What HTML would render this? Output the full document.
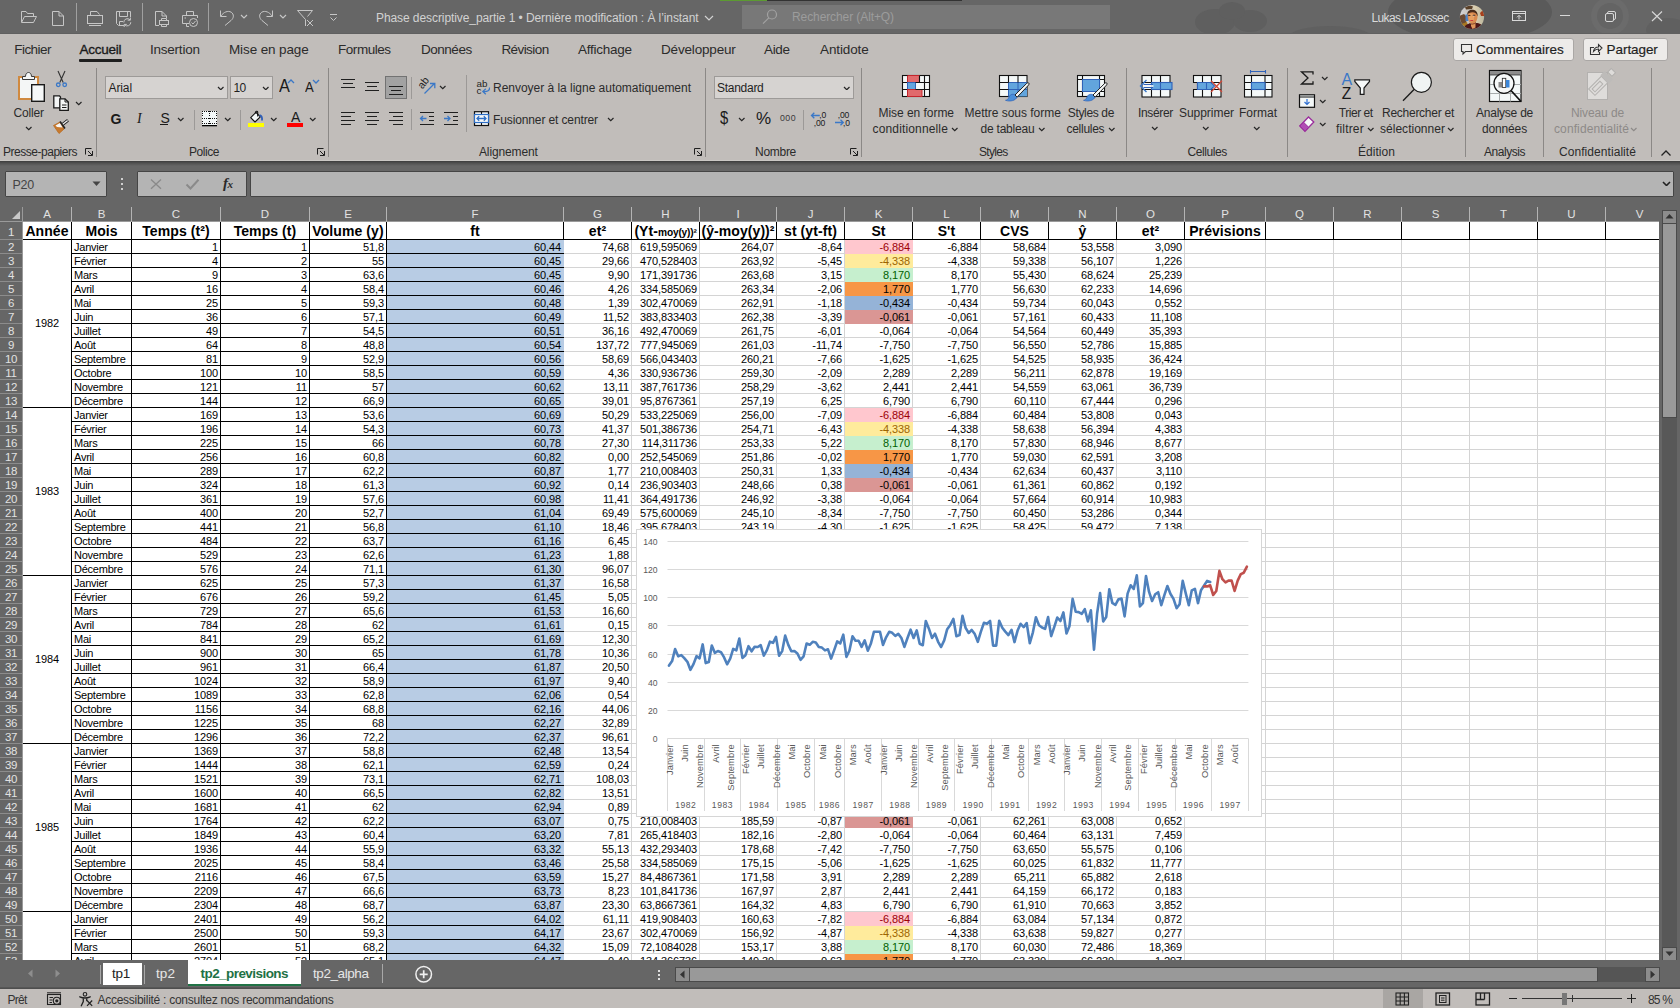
<!DOCTYPE html>
<html lang="fr"><head><meta charset="utf-8"><title>Excel</title><style>
html,body{margin:0;padding:0}
body{width:1680px;height:1008px;overflow:hidden;position:relative;background:#666;font-family:"Liberation Sans",sans-serif}
.ab{position:absolute}
.tx{position:absolute;white-space:nowrap;line-height:1}

#grid{position:absolute;overflow:hidden;background:#666}
.ab{position:absolute}
.vl{position:absolute;width:1px;background:#d4d4d4}
.hl{position:absolute;height:1px;background:#d4d4d4}
.bv{position:absolute;width:1px;background:#000}
.bh{position:absolute;height:1px;background:#000}
.cr,.cl,.cy{position:absolute;height:14px;line-height:15px;font-size:11px;letter-spacing:-0.12px;color:#000;white-space:nowrap;overflow:hidden;box-sizing:border-box}
.cr{text-align:right;padding-right:2px}
.cl{text-align:left;padding-left:2px;letter-spacing:-0.24px}
.cy{text-align:center}
.h1{position:absolute;height:17px;line-height:18px;font-size:14px;font-weight:bold;text-align:center;white-space:nowrap;overflow:hidden;color:#000;letter-spacing:0.08px}
.h1 .sm{font-size:10.2px;letter-spacing:-0.2px}
.ch{position:absolute;top:0;height:14px;line-height:15px;text-align:center;color:#e2e2e2;font-size:11.5px}
.rh{position:absolute;left:0;width:22px;text-align:center;color:#e2e2e2;font-size:11.5px;letter-spacing:-0.3px}
</style></head>
<body>
<div id="title" class="ab" style="left:0;top:0;width:1680px;height:34px;background:#666;overflow:hidden">
<svg class="ab" style="left:1080px;top:0" width="600" height="34" viewBox="1080 0 600 34"><ellipse cx="1215" cy="22" rx="20" ry="13" fill="#5f5f5f"/><ellipse cx="1250" cy="21" rx="17" ry="11" fill="#5f5f5f"/><ellipse cx="1232" cy="11" rx="13" ry="9" fill="#5f5f5f"/><ellipse cx="1330" cy="36" rx="40" ry="10" fill="#606060"/><ellipse cx="1470" cy="12" rx="82" ry="30" fill="#5a5a5a"/><circle cx="1610" cy="16" r="19" fill="#6b6b6b"/><circle cx="1610" cy="16" r="13" fill="#646464"/><ellipse cx="1668" cy="30" rx="22" ry="12" fill="#606060"/></svg>
<div class="ab" style="left:720px;top:0;width:47px;height:1px;background:#5c9a32"></div>
<div class="ab" style="left:767px;top:0;width:195px;height:1px;background:#333"></div>
<svg class="ab" style="left:20px;top:9px" width="18" height="16" viewBox="0 0 18 16"><path d="M1.5 13V2.5H6L7.5 4.5H13.5V7" fill="none" stroke="#c6c6c6" stroke-width="1"/><path d="M1.5 13.5L4.5 7.5H16.5L13.5 13.5Z" fill="none" stroke="#c6c6c6" stroke-width="1"/></svg>
<svg class="ab" style="left:51px;top:10px" width="14" height="17" viewBox="0 0 14 17"><path d="M1.5 1.5H8L12.5 6V15.5H1.5Z" fill="none" stroke="#c6c6c6" stroke-width="1"/><path d="M8 1.5V6H12.5" fill="none" stroke="#c6c6c6" stroke-width="1"/></svg>
<div class="ab" style="left:76px;top:3px;width:1px;height:28px;background:#a0a0a0"></div>
<svg class="ab" style="left:86px;top:10px" width="18" height="17" viewBox="0 0 18 17"><path d="M4.5 5V1.5H11L13.5 4.5" fill="none" stroke="#c6c6c6" stroke-width="1"/><rect x="1.5" y="5.5" width="15" height="8" fill="none" stroke="#c6c6c6" stroke-width="1"/><path d="M3 15.5H15" fill="none" stroke="#c6c6c6" stroke-width="1"/></svg>
<svg class="ab" style="left:115px;top:10px" width="18" height="17" viewBox="0 0 18 17"><path d="M9 15.5H3.5L1.5 13.5V1.5H15.5V7" fill="none" stroke="#c6c6c6" stroke-width="1"/><path d="M4.5 1.5V6.5H12.5V1.5" fill="none" stroke="#c6c6c6" stroke-width="1"/><path d="M4.500 15V11.5H8" fill="none" stroke="#c6c6c6" stroke-width="1"/><path d="M8.800 12.5A3.6 3.600 0 0 1 15 9.800M15.400 7.500V10.200H12.700" fill="none" stroke="#c6c6c6" stroke-width="1"/><path d="M15.800 12.200A3.600 3.600 0 0 1 9.600 14.800M9.200 17V14.400H11.800" fill="none" stroke="#c6c6c6" stroke-width="1"/></svg>
<div class="ab" style="left:142px;top:3px;width:1px;height:28px;background:#a0a0a0"></div>
<svg class="ab" style="left:154px;top:10px" width="16" height="17" viewBox="0 0 16 17"><path d="M5 15.500H1.500V1.500H8L12.500 6V8" fill="none" stroke="#c6c6c6" stroke-width="1"/><path d="M8 1.500V6H12.500" fill="none" stroke="#c6c6c6" stroke-width="1"/><rect x="5.500" y="10.500" width="9" height="4" fill="none" stroke="#c6c6c6" stroke-width="1"/><path d="M7.500 10.500V8.500H12.500V10.500M7.500 14.500V16.500H12.500V14.500" fill="none" stroke="#c6c6c6" stroke-width="1"/></svg>
<svg class="ab" style="left:181px;top:10px" width="18" height="17" viewBox="0 0 18 17"><path d="M5.500 5.500V1.500H12.500V5.500" fill="none" stroke="#c6c6c6" stroke-width="1"/><path d="M8 13.500H5.500V16.500H8M5.500 13.500H1.500V5.500H16.500V8" fill="none" stroke="#c6c6c6" stroke-width="1"/><circle cx="12.500" cy="12.500" r="4" fill="none" stroke="#c6c6c6" stroke-width="1"/><path d="M10.500 12.500L12 14L14.500 11" fill="none" stroke="#c6c6c6" stroke-width="1"/><path d="M3.500 8H5" fill="none" stroke="#c6c6c6" stroke-width="1"/></svg>
<div class="ab" style="left:208px;top:3px;width:1px;height:28px;background:#a0a0a0"></div>
<svg class="ab" style="left:219px;top:9px" width="16" height="18" viewBox="0 0 16 18"><path d="M1.500 1.500V7.500H7.500" fill="none" stroke="#c6c6c6" stroke-width="1" stroke-width="1.200"/><path d="M1.800 7.200C4.500 3 9 1.300 12.200 3.200C15.200 5.200 15 9 12 11.500L6 16.500" fill="none" stroke="#c6c6c6" stroke-width="1" stroke-width="1.200"/></svg>
<svg class="ab" style="left:239.5px;top:14.0px" width="8" height="5.0"><path d="M1 1L4.0 4.0L7 1" fill="none" stroke="#c6c6c6" stroke-width="1.2"/></svg>
<svg class="ab" style="left:258px;top:9px" width="16" height="18" viewBox="0 0 16 18"><path d="M14.500 1.500V7.500H8.500" fill="none" stroke="#c6c6c6" stroke-width="1" stroke-width="1.200"/><path d="M14.200 7.200C11.500 3 7 1.300 3.800 3.200C0.800 5.200 1 9 4 11.500L10 16.500" fill="none" stroke="#c6c6c6" stroke-width="1" stroke-width="1.200"/></svg>
<svg class="ab" style="left:278.5px;top:14.0px" width="8" height="5.0"><path d="M1 1L4.0 4.0L7 1" fill="none" stroke="#c6c6c6" stroke-width="1.2"/></svg>
<svg class="ab" style="left:296px;top:9px" width="18" height="18" viewBox="0 0 18 18"><path d="M9.500 17V10.500L1.500 1.500H16.500L11.500 7.500" fill="none" stroke="#c6c6c6" stroke-width="1" stroke-width="1.200"/><path d="M11 11L17 17M17 11L11 17" fill="none" stroke="#c6c6c6" stroke-width="1" stroke-width="1.200"/></svg>
<svg class="ab" style="left:329px;top:12px" width="9" height="10" viewBox="0 0 9 10"><path d="M1 2.500H8" fill="none" stroke="#c6c6c6" stroke-width="1" stroke-width="1.200"/><path d="M1.500 5.500L4.500 8.500L7.500 5.500" fill="none" stroke="#c6c6c6" stroke-width="1" stroke-width="1.200"/></svg>
<span class="tx" style="left:376.0px;top:9.5px;height:16px;line-height:16px;font-size:12px;color:#d2d2d2;letter-spacing:-0.081px;">Phase descriptive_partie 1 • Dernière modification : À l’instant</span>
<svg class="ab" style="left:703.5px;top:14.5px" width="10" height="6.0"><path d="M1 1L5.0 5.0L9 1" fill="none" stroke="#d2d2d2" stroke-width="1.2"/></svg>
<div class="ab" style="left:742px;top:5px;width:368px;height:24px;background:#787878"></div>
<svg class="ab" style="left:761px;top:8px" width="18" height="18" viewBox="0 0 18 18"><circle cx="11" cy="6.500" r="4.500" fill="none" stroke="#a2a2a2" stroke-width="1.200"/><path d="M7.800 9.800L2 15.600" stroke="#a2a2a2" stroke-width="1.200"/></svg>
<span class="tx" style="left:792.0px;top:8.5px;height:16px;line-height:16px;font-size:12px;color:#9c9c9c;letter-spacing:-0.095px;">Rechercher (Alt+Q)</span>
<span class="tx" style="left:1371.5px;top:9.5px;height:16px;line-height:16px;font-size:12px;color:#dadada;letter-spacing:-0.647px;">Lukas LeJossec</span>
<svg class="ab" style="left:1459px;top:4px" width="26" height="26" viewBox="1459 4 26 26"><defs><clipPath id="av"><circle cx="1472" cy="17" r="12.100"/></clipPath><linearGradient id="avg" x1="0" x2="1" y1="0" y2="0"><stop offset="0" stop-color="#d4d4d8"/><stop offset="0.450" stop-color="#c4c0b8"/><stop offset="0.600" stop-color="#dccfb0"/><stop offset="1" stop-color="#b8b49c"/></linearGradient></defs><g clip-path="url(#av)"><rect x="1459" y="4" width="26" height="26" fill="url(#avg)"/><path d="M1459 16L1464 14L1467 17L1466 24L1459 27Z" fill="#6b4a32"/><path d="M1461 24L1467 22L1469 30L1460 30Z" fill="#a87820"/><rect x="1465.500" y="14.500" width="3" height="6.500" fill="#4a80c4"/><path d="M1480 13L1484 9L1485 16L1481 16Z" fill="#a8401c"/><path d="M1465 7L1470 5.500L1473 6.500L1472 9L1466 9.500Z" fill="#5a4028"/><path d="M1464 30C1464 25 1468 23 1472 24C1476 22 1483 23 1484 30Z" fill="#4c1719"/><path d="M1471 22H1475.500V27.500L1472.500 29L1471 26Z" fill="#e0965c"/><ellipse cx="1472.600" cy="17" rx="4.900" ry="6.400" fill="#d98a4e"/><ellipse cx="1471.500" cy="17.500" rx="2.600" ry="4" fill="#e6a060"/><path d="M1467.300 15C1467 11 1470 9.300 1473 9.800C1476.500 10.300 1478 13 1477.600 16.500C1476.800 13.500 1475 12.300 1472.500 12.300C1470 12.300 1468.300 13.200 1467.300 15Z" fill="#4a2c1a"/><rect x="1468.200" y="15" width="2.200" height="1" fill="#4a2c1a"/><rect x="1472.800" y="14.800" width="2.400" height="1.100" fill="#3a2418"/><rect x="1473.400" y="15.600" width="1" height="0.800" fill="#eee"/><rect x="1470.300" y="20" width="2.800" height="0.900" fill="#c8343c"/><path d="M1469 23.200C1471 24.500 1474 24.500 1476 22.500" stroke="#6a3018" stroke-width="0.800" fill="none"/></g></svg>
<svg class="ab" style="left:1511px;top:10px" width="16" height="12" viewBox="0 0 16 12"><rect x="1.500" y="1.500" width="13" height="9" fill="none" stroke="#d8d8d8"/><path d="M1.500 3.500H14.500" stroke="#d8d8d8"/><path d="M8 9.500V5.500M6 7.300L8 5.300L10 7.300" fill="none" stroke="#d8d8d8"/></svg>
<div class="ab" style="left:1560px;top:15px;width:10px;height:1px;background:#d8d8d8"></div>
<svg class="ab" style="left:1605px;top:11px" width="12" height="11" viewBox="0 0 12 11"><rect x="0.500" y="2.500" width="8" height="8" rx="1.500" fill="none" stroke="#d8d8d8"/><path d="M2.500 2.500V2A1.500 1.500 0 0 1 4 0.500H9A1.500 1.500 0 0 1 10.500 2V7A1.500 1.500 0 0 1 9 8.500H8.500" fill="none" stroke="#d8d8d8"/></svg>
<svg class="ab" style="left:1651px;top:11px" width="12" height="11" viewBox="0 0 12 11"><path d="M1 0.500L11 10M11 0.500L1 10" stroke="#d8d8d8" stroke-width="1.100"/></svg>
</div>
<div class="ab" style="left:0;top:34px;width:1680px;height:127px;background:#c1bdba"></div>
<div class="ab" style="left:0;top:160px;width:1680px;height:1px;background:#cbc8c5"></div>
<div class="ab" style="left:0;top:33px;width:1680px;height:1px;background:#606060"></div>
<span class="tx" style="left:14.3px;top:40.5px;height:18px;line-height:18px;font-size:13.5px;color:#2b2b2b;letter-spacing:-0.559px;">Fichier</span>
<span class="tx" style="left:150.0px;top:40.5px;height:18px;line-height:18px;font-size:13.5px;color:#2b2b2b;letter-spacing:-0.231px;">Insertion</span>
<span class="tx" style="left:229.0px;top:40.5px;height:18px;line-height:18px;font-size:13.5px;color:#2b2b2b;letter-spacing:-0.122px;">Mise en page</span>
<span class="tx" style="left:338.0px;top:40.5px;height:18px;line-height:18px;font-size:13.5px;color:#2b2b2b;letter-spacing:-0.458px;">Formules</span>
<span class="tx" style="left:421.0px;top:40.5px;height:18px;line-height:18px;font-size:13.5px;color:#2b2b2b;letter-spacing:-0.478px;">Données</span>
<span class="tx" style="left:501.4px;top:40.5px;height:18px;line-height:18px;font-size:13.5px;color:#2b2b2b;letter-spacing:-0.573px;">Révision</span>
<span class="tx" style="left:578.0px;top:40.5px;height:18px;line-height:18px;font-size:13.5px;color:#2b2b2b;letter-spacing:-0.261px;">Affichage</span>
<span class="tx" style="left:661.0px;top:40.5px;height:18px;line-height:18px;font-size:13.5px;color:#2b2b2b;letter-spacing:-0.169px;">Développeur</span>
<span class="tx" style="left:764.0px;top:40.5px;height:18px;line-height:18px;font-size:13.5px;color:#2b2b2b;letter-spacing:-0.333px;">Aide</span>
<span class="tx" style="left:820.0px;top:40.5px;height:18px;line-height:18px;font-size:13.5px;color:#2b2b2b;letter-spacing:-0.118px;">Antidote</span>
<span class="tx" style="left:79.4px;top:40.5px;height:18px;line-height:18px;font-size:13.5px;color:#1a1a1a;letter-spacing:-0.219px;-webkit-text-stroke:0.35px #1a1a1a;">Accueil</span>
<div class="ab" style="left:79px;top:59px;width:43px;height:3px;background:#1f1f1f;border-radius:1px"></div>
<div class="ab" style="left:1453px;top:38px;width:119px;height:21px;background:#edebe9;border:1px solid #aaa7a5;border-radius:3px"></div>
<svg class="ab" style="left:1460px;top:43px" width="13" height="13" viewBox="0 0 13 13"><path d="M1.500 1.500H11.500V8.500H5.500L3 11V8.500H1.500Z" fill="none" stroke="#333" stroke-width="1.100"/></svg>
<span class="tx" style="left:1476.0px;top:40.5px;height:18px;line-height:18px;font-size:13.5px;color:#1f1f1f;letter-spacing:-0.007px;-webkit-text-stroke:0.18px #1f1f1f;">Commentaires</span>
<div class="ab" style="left:1583px;top:38px;width:83px;height:21px;background:#edebe9;border:1px solid #aaa7a5;border-radius:3px"></div>
<svg class="ab" style="left:1589px;top:42px" width="14" height="14" viewBox="0 0 14 14"><path d="M5 5.500H1.500V12.500H10.500V10" fill="none" stroke="#333" stroke-width="1.100"/><path d="M4.500 9.500C5 6.500 7 5 9.500 5V2.500L13 6L9.500 9.500V7C7.500 7 6 7.800 4.500 9.500Z" fill="none" stroke="#333" stroke-width="1.100"/></svg>
<span class="tx" style="left:1606.6px;top:40.5px;height:18px;line-height:18px;font-size:13.5px;color:#1f1f1f;letter-spacing:-0.073px;-webkit-text-stroke:0.18px #1f1f1f;">Partager</span>
<svg class="ab" style="left:17px;top:71px" width="30" height="32" viewBox="0 0 30 32"><rect x="2" y="6" width="19" height="22" fill="#f4f6f6" stroke="#d0893f" stroke-width="2"/><path d="M5.500 8.500V5.500H8.500C8.500 3 9.800 1.500 11.500 1.500C13.200 1.500 14.500 3 14.500 5.500H17.500V8.500Z" fill="#f4f6f6" stroke="#3a3a3a" stroke-width="1"/><rect x="14.700" y="13.700" width="12.600" height="16.600" fill="#f6f8f8" stroke="#1a1a1a" stroke-width="1.400"/></svg>
<span class="tx" style="left:13.6px;top:105.0px;height:16px;line-height:16px;font-size:12px;color:#2b2b2b;letter-spacing:-0.207px;">Coller</span>
<svg class="ab" style="left:24.55px;top:126.125px" width="7.5" height="4.75"><path d="M1 1L3.75 3.75L6.5 1" fill="none" stroke="#262626" stroke-width="1.2"/></svg>
<svg class="ab" style="left:55px;top:70px" width="13" height="18" viewBox="0 0 13 18"><path d="M3 1L8.200 12.500M10 1L4.800 12.500" fill="none" stroke="#333" stroke-width="1.100"/><circle cx="3.300" cy="14.800" r="1.800" fill="none" stroke="#3b78c7" stroke-width="1.300"/><circle cx="9.700" cy="14.800" r="1.800" fill="none" stroke="#3b78c7" stroke-width="1.300"/></svg>
<svg class="ab" style="left:52px;top:94px" width="19" height="19" viewBox="0 0 19 19"><path d="M1.800 1.800H7.500L8.500 3V13.800H1.800Z" fill="#f4f6f6" stroke="#1a1a1a" stroke-width="1.300"/><path d="M7.800 4.800H13L16.300 8V16.300H7.800Z" fill="#f4f6f6" stroke="#1a1a1a" stroke-width="1.300"/><path d="M13 4.800V8H16.300" fill="none" stroke="#1a1a1a" stroke-width="1"/><path d="M10 11H14.500M10 13.500H14.500" stroke="#1a1a1a" stroke-width="1"/></svg>
<svg class="ab" style="left:74.65px;top:101.225px" width="7.5" height="4.75"><path d="M1 1L3.75 3.75L6.5 1" fill="none" stroke="#262626" stroke-width="1.2"/></svg>
<svg class="ab" style="left:52px;top:118px" width="19" height="17" viewBox="0 0 19 17"><path d="M1.500 7.500L8 4L12 11L7 15.500Z" fill="#c87a2e" stroke="#b86a20" stroke-width="0.800"/><path d="M3.500 7.500L8 5L10.500 9.500L5 9Z" fill="#f6f6f6"/><path d="M8 3.500L13 10.500" stroke="#222" stroke-width="1.600"/><path d="M10.500 6.500L16 2.200" stroke="#222" stroke-width="3"/><path d="M10.800 6.300L15.600 2.500" stroke="#f4f4f4" stroke-width="1.200"/></svg>
<span class="tx" style="left:3.0px;top:144.3px;height:16px;line-height:16px;font-size:12px;color:#2b2b2b;letter-spacing:-0.479px;">Presse-papiers</span>
<svg class="ab" style="left:85px;top:148px" width="9" height="9"><path d="M6.500 0.500H0.500V6.500" fill="none" stroke="#1f1f1f" stroke-width="1"/><path d="M3 3L7.200 7.200M7.500 3V7.500H3" fill="none" stroke="#1f1f1f" stroke-width="1"/></svg>
<div class="ab" style="left:96px;top:68px;width:1px;height:89px;background:#8b8886"></div>
<div class="ab" style="left:105px;top:76px;width:121px;height:21px;background:#d6d3d1;border:1px solid #9d9a98"></div>
<span class="tx" style="left:108.5px;top:79.5px;height:16px;line-height:16px;font-size:12px;color:#1f1f1f;letter-spacing:-0.103px;">Arial</span>
<svg class="ab" style="left:217.25px;top:85.625px" width="7.5" height="4.75"><path d="M1 1L3.75 3.75L6.5 1" fill="none" stroke="#262626" stroke-width="1.2"/></svg>
<div class="ab" style="left:230px;top:76px;width:41px;height:21px;background:#d6d3d1;border:1px solid #9d9a98"></div>
<span class="tx" style="left:233.5px;top:79.5px;height:16px;line-height:16px;font-size:12px;color:#1f1f1f;letter-spacing:-0.680px;">10</span>
<svg class="ab" style="left:262.25px;top:85.625px" width="7.5" height="4.75"><path d="M1 1L3.75 3.75L6.5 1" fill="none" stroke="#262626" stroke-width="1.2"/></svg>
<span class="tx" style="left:279.0px;top:73.5px;height:24px;line-height:24px;font-size:18.5px;color:#1a1a1a;letter-spacing:1.438px;transform:scaleX(0.88);transform-origin:left center;">A</span>
<svg class="ab" style="left:287px;top:79px" width="8" height="5" viewBox="0 0 8 5"><path d="M1 4L4 1L7 4" fill="none" stroke="#3b78c7" stroke-width="1.300"/></svg>
<span class="tx" style="left:304.5px;top:77.5px;height:19px;line-height:19px;font-size:14.5px;color:#1a1a1a;letter-spacing:0.995px;transform:scaleX(0.9);transform-origin:left center;">A</span>
<svg class="ab" style="left:312px;top:79px" width="8" height="5" viewBox="0 0 8 5"><path d="M1 1L4 4L7 1" fill="none" stroke="#3b78c7" stroke-width="1.300"/></svg>
<span class="tx" style="left:110.5px;top:109.5px;height:18px;line-height:18px;font-size:14px;color:#1a1a1a;letter-spacing:-0.391px;font-weight:bold;">G</span>
<span class="tx" style="left:137.0px;top:109.5px;height:18px;line-height:18px;font-size:14px;color:#1a1a1a;letter-spacing:1.828px;font-style:italic;font-family:'Liberation Serif',serif;">I</span>
<span class="tx" style="left:160.5px;top:109.0px;height:18px;line-height:18px;font-size:14px;color:#1a1a1a;letter-spacing:-2.344px;">S</span>
<div class="ab" style="left:160px;top:124px;width:8px;height:1px;background:#1a1a1a"></div>
<svg class="ab" style="left:177.25px;top:117.125px" width="7.5" height="4.75"><path d="M1 1L3.75 3.75L6.5 1" fill="none" stroke="#262626" stroke-width="1.2"/></svg>
<div class="ab" style="left:194px;top:110px;width:1px;height:20px;background:#9c9997"></div>
<svg class="ab" style="left:200px;top:109px" width="20" height="20" viewBox="200 109 20 20"><rect x="202" y="111" width="15" height="14" fill="#f4f8f8"/><rect x="202" y="111" width="1" height="1" fill="#111"/><rect x="204" y="111" width="1" height="1" fill="#111"/><rect x="206" y="111" width="1" height="1" fill="#111"/><rect x="208" y="111" width="1" height="1" fill="#111"/><rect x="210" y="111" width="1" height="1" fill="#111"/><rect x="212" y="111" width="1" height="1" fill="#111"/><rect x="214" y="111" width="1" height="1" fill="#111"/><rect x="216" y="111" width="1" height="1" fill="#111"/><rect x="202" y="118" width="1" height="1" fill="#111"/><rect x="204" y="118" width="1" height="1" fill="#111"/><rect x="206" y="118" width="1" height="1" fill="#111"/><rect x="208" y="118" width="1" height="1" fill="#111"/><rect x="210" y="118" width="1" height="1" fill="#111"/><rect x="212" y="118" width="1" height="1" fill="#111"/><rect x="214" y="118" width="1" height="1" fill="#111"/><rect x="216" y="118" width="1" height="1" fill="#111"/><rect x="202" y="123" width="1" height="1" fill="#111"/><rect x="204" y="123" width="1" height="1" fill="#111"/><rect x="206" y="123" width="1" height="1" fill="#111"/><rect x="208" y="123" width="1" height="1" fill="#111"/><rect x="210" y="123" width="1" height="1" fill="#111"/><rect x="212" y="123" width="1" height="1" fill="#111"/><rect x="214" y="123" width="1" height="1" fill="#111"/><rect x="216" y="123" width="1" height="1" fill="#111"/><rect x="202" y="111" width="1" height="1" fill="#111"/><rect x="202" y="113" width="1" height="1" fill="#111"/><rect x="202" y="115" width="1" height="1" fill="#111"/><rect x="202" y="118" width="1" height="1" fill="#111"/><rect x="202" y="121" width="1" height="1" fill="#111"/><rect x="202" y="123" width="1" height="1" fill="#111"/><rect x="209" y="111" width="1" height="1" fill="#111"/><rect x="209" y="113" width="1" height="1" fill="#111"/><rect x="209" y="115" width="1" height="1" fill="#111"/><rect x="209" y="118" width="1" height="1" fill="#111"/><rect x="209" y="121" width="1" height="1" fill="#111"/><rect x="209" y="123" width="1" height="1" fill="#111"/><rect x="216" y="111" width="1" height="1" fill="#111"/><rect x="216" y="113" width="1" height="1" fill="#111"/><rect x="216" y="115" width="1" height="1" fill="#111"/><rect x="216" y="118" width="1" height="1" fill="#111"/><rect x="216" y="121" width="1" height="1" fill="#111"/><rect x="216" y="123" width="1" height="1" fill="#111"/><rect x="202" y="125" width="15" height="1.300" fill="#000"/></svg>
<svg class="ab" style="left:223.75px;top:117.125px" width="7.5" height="4.75"><path d="M1 1L3.75 3.75L6.5 1" fill="none" stroke="#262626" stroke-width="1.2"/></svg>
<div class="ab" style="left:240px;top:110px;width:1px;height:20px;background:#9c9997"></div>
<svg class="ab" style="left:246px;top:108px" width="22" height="21" viewBox="246 108 22 21"><path d="M250.700 117.600L256 112.300L260.300 116.800L255 122Z" fill="#f4f8f8" stroke="#111" stroke-width="1.100" stroke-linejoin="round"/><path d="M255.300 113.200C255.300 110.800 257.700 110.600 257.700 112.500V116.600" fill="none" stroke="#111" stroke-width="1.100"/><path d="M259.600 115.200C261.800 115.800 262.300 118 262 120.500" fill="none" stroke="#2f5fb8" stroke-width="1.800"/><rect x="248" y="123" width="16" height="4" fill="#ffff00"/></svg>
<svg class="ab" style="left:269.75px;top:117.125px" width="7.5" height="4.75"><path d="M1 1L3.75 3.75L6.5 1" fill="none" stroke="#262626" stroke-width="1.2"/></svg>
<span class="tx" style="left:290.6px;top:106.8px;height:20px;line-height:20px;font-size:15.5px;color:#1a1a1a;letter-spacing:1.091px;transform:scaleX(0.9);transform-origin:left center;">A</span>
<div class="ab" style="left:287px;top:123px;width:16px;height:4px;background:#ff0000"></div>
<svg class="ab" style="left:308.85px;top:117.125px" width="7.5" height="4.75"><path d="M1 1L3.75 3.75L6.5 1" fill="none" stroke="#262626" stroke-width="1.2"/></svg>
<span class="tx" style="left:189.0px;top:144.3px;height:16px;line-height:16px;font-size:12px;color:#2b2b2b;letter-spacing:-0.448px;">Police</span>
<svg class="ab" style="left:317px;top:148px" width="9" height="9"><path d="M6.500 0.500H0.500V6.500" fill="none" stroke="#1f1f1f" stroke-width="1"/><path d="M3 3L7.200 7.200M7.500 3V7.500H3" fill="none" stroke="#1f1f1f" stroke-width="1"/></svg>
<div class="ab" style="left:328px;top:68px;width:1px;height:89px;background:#8b8886"></div>
<div class="ab" style="left:385px;top:76px;width:20px;height:21px;background:#a2a2a2;border:1px solid #727272"></div>
<svg class="ab" style="left:340px;top:76px" width="120" height="54" viewBox="340 76 120 54"><rect x="341" y="79" width="14" height="1" fill="#1f1f1f"/><rect x="343" y="83" width="10" height="1" fill="#1f1f1f"/><rect x="341" y="87" width="14" height="1" fill="#1f1f1f"/><rect x="365" y="82" width="14" height="1" fill="#1f1f1f"/><rect x="367" y="86" width="10" height="1" fill="#1f1f1f"/><rect x="365" y="90" width="14" height="1" fill="#1f1f1f"/><rect x="389" y="86" width="14" height="1" fill="#1f1f1f"/><rect x="391" y="90" width="10" height="1" fill="#1f1f1f"/><rect x="389" y="94" width="14" height="1" fill="#1f1f1f"/><rect x="341" y="112" width="14" height="1" fill="#1f1f1f"/><rect x="341" y="116" width="10" height="1" fill="#1f1f1f"/><rect x="341" y="120" width="14" height="1" fill="#1f1f1f"/><rect x="341" y="124" width="10" height="1" fill="#1f1f1f"/><rect x="365" y="112" width="14" height="1" fill="#1f1f1f"/><rect x="367" y="116" width="10" height="1" fill="#1f1f1f"/><rect x="365" y="120" width="14" height="1" fill="#1f1f1f"/><rect x="367" y="124" width="10" height="1" fill="#1f1f1f"/><rect x="389" y="112" width="14" height="1" fill="#1f1f1f"/><rect x="393" y="116" width="10" height="1" fill="#1f1f1f"/><rect x="389" y="120" width="14" height="1" fill="#1f1f1f"/><rect x="393" y="124" width="10" height="1" fill="#1f1f1f"/><rect x="420" y="112" width="14" height="1" fill="#1f1f1f"/><rect x="429" y="116" width="5" height="1" fill="#1f1f1f"/><rect x="429" y="120" width="5" height="1" fill="#1f1f1f"/><rect x="420" y="124" width="14" height="1" fill="#1f1f1f"/><rect x="444" y="112" width="14" height="1" fill="#1f1f1f"/><rect x="453" y="116" width="5" height="1" fill="#1f1f1f"/><rect x="453" y="120" width="5" height="1" fill="#1f1f1f"/><rect x="444" y="124" width="14" height="1" fill="#1f1f1f"/><path d="M426.500 118.500H420.500M423 116L420.500 118.500L423 121" fill="none" stroke="#3b78c7" stroke-width="1.300"/><path d="M444 118.500H450M447.500 116L450 118.500L447.500 121" fill="none" stroke="#3b78c7" stroke-width="1.300"/></svg>
<div class="ab" style="left:411px;top:77px;width:1px;height:22px;background:#9c9997"></div>
<svg class="ab" style="left:416px;top:74px" width="24" height="24" viewBox="416 74 24 24"><text x="0" y="0" font-size="10.500" fill="#1f1f1f" transform="translate(422.500 89.500) rotate(-52)" font-family="Liberation Sans,sans-serif">ab</text><path d="M424.500 93.500L434.500 83.500M430 83.500H434.800V88.300" fill="none" stroke="#3b78c7" stroke-width="1.300"/></svg>
<svg class="ab" style="left:438.75px;top:85.125px" width="7.5" height="4.75"><path d="M1 1L3.75 3.75L6.5 1" fill="none" stroke="#262626" stroke-width="1.2"/></svg>
<div class="ab" style="left:466px;top:75px;width:1px;height:57px;background:#9c9997"></div>
<svg class="ab" style="left:475px;top:76px" width="18" height="22" viewBox="475 76 18 22"><text x="476.500" y="86.800" font-size="9.800" fill="#1f1f1f" font-family="Liberation Sans,sans-serif">ab</text><text x="476.500" y="93.800" font-size="9.800" fill="#1f1f1f" font-family="Liberation Sans,sans-serif">c</text><path d="M489.500 87.500C490 90.500 487.500 91.800 483.300 91.500M485.800 88.800L482.800 91.500L485.800 94.300" fill="none" stroke="#3b78c7" stroke-width="1.200"/></svg>
<span class="tx" style="left:493.0px;top:79.5px;height:16px;line-height:16px;font-size:12px;color:#2b2b2b;letter-spacing:-0.023px;">Renvoyer à la ligne automatiquement</span>
<div class="ab" style="left:411px;top:109px;width:1px;height:21px;background:#9c9997"></div>
<svg class="ab" style="left:472px;top:109px" width="20" height="19" viewBox="472 109 20 19"><rect x="474.500" y="111.700" width="14" height="13.800" fill="#f6f8f8" stroke="#111" stroke-width="1.200"/><path d="M481.500 111.700V114.500M481.500 122.500V125.500" stroke="#111" stroke-width="1.100"/><rect x="474.500" y="114.500" width="14" height="8" fill="#f6f8f8" stroke="#2f6fc6" stroke-width="1.200"/><path d="M477 118.500H486M479.200 116.300L477 118.500L479.200 120.700M483.800 116.300L486 118.500L483.800 120.700" fill="none" stroke="#2f6fc6" stroke-width="1.300"/></svg>
<span class="tx" style="left:493.0px;top:111.5px;height:16px;line-height:16px;font-size:12px;color:#2b2b2b;letter-spacing:-0.120px;">Fusionner et centrer</span>
<svg class="ab" style="left:607.25px;top:117.125px" width="7.5" height="4.75"><path d="M1 1L3.75 3.75L6.5 1" fill="none" stroke="#262626" stroke-width="1.2"/></svg>
<span class="tx" style="left:479.0px;top:144.3px;height:16px;line-height:16px;font-size:12px;color:#2b2b2b;letter-spacing:-0.135px;">Alignement</span>
<svg class="ab" style="left:694px;top:148px" width="9" height="9"><path d="M6.500 0.500H0.500V6.500" fill="none" stroke="#1f1f1f" stroke-width="1"/><path d="M3 3L7.200 7.200M7.500 3V7.500H3" fill="none" stroke="#1f1f1f" stroke-width="1"/></svg>
<div class="ab" style="left:705px;top:68px;width:1px;height:89px;background:#8b8886"></div>
<div class="ab" style="left:714px;top:76px;width:138px;height:21px;background:#d6d3d1;border:1px solid #9d9a98"></div>
<span class="tx" style="left:717.0px;top:79.5px;height:16px;line-height:16px;font-size:12px;color:#1f1f1f;letter-spacing:-0.275px;">Standard</span>
<svg class="ab" style="left:843.25px;top:85.625px" width="7.5" height="4.75"><path d="M1 1L3.75 3.75L6.5 1" fill="none" stroke="#262626" stroke-width="1.2"/></svg>
<span class="tx" style="left:719.5px;top:107.3px;height:23px;line-height:23px;font-size:18px;color:#1a1a1a;letter-spacing:1.787px;transform:scaleX(0.82);transform-origin:left center;">$</span>
<svg class="ab" style="left:738.25px;top:117.125px" width="7.5" height="4.75"><path d="M1 1L3.75 3.75L6.5 1" fill="none" stroke="#262626" stroke-width="1.2"/></svg>
<span class="tx" style="left:756.0px;top:107.5px;height:22px;line-height:22px;font-size:17px;color:#1a1a1a;letter-spacing:0.375px;">%</span>
<span class="tx" style="left:780.0px;top:112.8px;height:11px;line-height:11px;font-size:8.8px;color:#3a3a3a;letter-spacing:0.438px;">000</span>
<div class="ab" style="left:803px;top:110px;width:1px;height:20px;background:#9c9997"></div>
<svg class="ab" style="left:809px;top:109px" width="20" height="20" viewBox="809 109 20 20"><path d="M819.800 115.500H811.500M814.300 112.700L811.500 115.500L814.300 118.300" fill="none" stroke="#3b78c7" stroke-width="1.300"/><text x="819.300" y="117.600" font-size="8.600" fill="#1a1a1a" font-family="Liberation Sans,sans-serif" letter-spacing="-0.200">,0</text><text x="813.800" y="126" font-size="8.600" fill="#1a1a1a" font-family="Liberation Sans,sans-serif" letter-spacing="-0.200">,00</text></svg>
<svg class="ab" style="left:833px;top:109px" width="20" height="20" viewBox="833 109 20 20"><text x="837.800" y="117.600" font-size="8.600" fill="#1a1a1a" font-family="Liberation Sans,sans-serif" letter-spacing="-0.200">,00</text><path d="M835 122.500H843.300M840.500 119.700L843.300 122.500L840.500 125.300" fill="none" stroke="#3b78c7" stroke-width="1.300"/><text x="843" y="126" font-size="8.600" fill="#1a1a1a" font-family="Liberation Sans,sans-serif" letter-spacing="-0.200">,0</text></svg>
<span class="tx" style="left:755.0px;top:144.3px;height:16px;line-height:16px;font-size:12px;color:#2b2b2b;letter-spacing:-0.281px;">Nombre</span>
<svg class="ab" style="left:850px;top:148px" width="9" height="9"><path d="M6.500 0.500H0.500V6.500" fill="none" stroke="#1f1f1f" stroke-width="1"/><path d="M3 3L7.200 7.200M7.500 3V7.500H3" fill="none" stroke="#1f1f1f" stroke-width="1"/></svg>
<div class="ab" style="left:861px;top:68px;width:1px;height:89px;background:#8b8886"></div>
<svg class="ab" style="left:900px;top:73px" width="33" height="27" viewBox="900 73 33 27"><rect x="902.500" y="75.500" width="27" height="21" fill="#f4f8f8" stroke="#111" stroke-width="1.100"/><rect x="907.500" y="75.500" width="12" height="7" fill="#e16a6c" stroke="#c3262d" stroke-width="1"/><rect x="907.500" y="82.500" width="8" height="7" fill="#62a5dd" stroke="#2f62b8" stroke-width="1"/><rect x="907.500" y="89.500" width="14.500" height="7" fill="#e16a6c" stroke="#c3262d" stroke-width="1"/><path d="M902.500 82.500H907M915.500 82.500H929.500M902.500 89.500H907M915.500 89.500H929.500M924.500 75.500V96.500M907.500 75.500V76M919.500 82.500V75.500" fill="none" stroke="#111" stroke-width="1.100"/></svg>
<span class="tx" style="left:878.5px;top:105.0px;height:16px;line-height:16px;font-size:12px;color:#2b2b2b;letter-spacing:-0.041px;">Mise en forme</span>
<span class="tx" style="left:872.5px;top:121.2px;height:16px;line-height:16px;font-size:12px;color:#2b2b2b;letter-spacing:0.151px;">conditionnelle</span>
<svg class="ab" style="left:951.05px;top:127.125px" width="7.5" height="4.75"><path d="M1 1L3.75 3.75L6.5 1" fill="none" stroke="#262626" stroke-width="1.2"/></svg>
<svg class="ab" style="left:997px;top:73px" width="36" height="31" viewBox="997 73 36 31"><rect x="999.500" y="75.500" width="27.500" height="21" fill="#f4f8f8" stroke="#111" stroke-width="1.100"/><rect x="1008.500" y="82.500" width="18.500" height="14" fill="#62a5dd"/><path d="M1008.500 82.500H1027M1008.500 89.500H1027M1018 82.500V96.500M1008.500 82.500V96.500" fill="none" stroke="#2f62b8" stroke-width="1"/><path d="M1008.500 75.500V82.500M1018 75.500V82.500M999.500 82.500H1008.500M999.500 89.500H1008.500" fill="none" stroke="#111" stroke-width="1.100"/><path d="M1015.5 95.3C1014 93.5 1010 94.0 1009 97.0C1008.5 99.0 1007 100.0 1005.5 100.3C1010 102.0 1016 100.5 1017 97.0Z" fill="#4a8fd9" stroke="#2f62b8" stroke-width="0.700"/><path d="M1015 95.0L1026.8 83.3C1028.2 81.9 1029.9 83.3 1028.7 84.9L1017.2 97.1Z" fill="#f6f8f8" stroke="#222" stroke-width="1"/></svg>
<span class="tx" style="left:964.5px;top:105.0px;height:16px;line-height:16px;font-size:12px;color:#2b2b2b;letter-spacing:-0.018px;">Mettre sous forme</span>
<span class="tx" style="left:980.5px;top:121.2px;height:16px;line-height:16px;font-size:12px;color:#2b2b2b;letter-spacing:-0.216px;">de tableau</span>
<svg class="ab" style="left:1037.55px;top:127.125px" width="7.5" height="4.75"><path d="M1 1L3.75 3.75L6.5 1" fill="none" stroke="#262626" stroke-width="1.2"/></svg>
<svg class="ab" style="left:1075px;top:73px" width="36" height="31" viewBox="1075 73 36 31"><rect x="1077.500" y="75.500" width="27" height="21" fill="#f4f8f8" stroke="#111" stroke-width="1.100"/><path d="M1077.500 79.500H1104.500M1077.500 91.500H1104.500M1082.500 75.500V96.500M1099.500 75.500V96.500" fill="none" stroke="#111" stroke-width="1.100"/><rect x="1082.500" y="79.500" width="17" height="12" fill="#62a5dd" stroke="#2f62b8" stroke-width="1"/><path d="M1093.5 95.3C1092 93.5 1088 94.0 1087 97.0C1086.5 99.0 1085 100.0 1083.5 100.3C1088 102.0 1094 100.5 1095 97.0Z" fill="#4a8fd9" stroke="#2f62b8" stroke-width="0.700"/><path d="M1093 95.0L1104.8 83.3C1106.2 81.9 1107.9 83.3 1106.7 84.9L1095.2 97.1Z" fill="#f6f8f8" stroke="#222" stroke-width="1"/></svg>
<span class="tx" style="left:1067.8px;top:105.0px;height:16px;line-height:16px;font-size:12px;color:#2b2b2b;letter-spacing:-0.351px;">Styles de</span>
<span class="tx" style="left:1066.5px;top:121.2px;height:16px;line-height:16px;font-size:12px;color:#2b2b2b;letter-spacing:-0.279px;">cellules</span>
<svg class="ab" style="left:1107.75px;top:127.125px" width="7.5" height="4.75"><path d="M1 1L3.75 3.75L6.5 1" fill="none" stroke="#262626" stroke-width="1.2"/></svg>
<span class="tx" style="left:979.0px;top:144.3px;height:16px;line-height:16px;font-size:12px;color:#2b2b2b;letter-spacing:-0.698px;">Styles</span>
<div class="ab" style="left:1126px;top:68px;width:1px;height:89px;background:#8b8886"></div>
<svg class="ab" style="left:1138px;top:69px" width="37" height="31" viewBox="1138 69 37 31"><rect x="1142" y="75.500" width="28" height="21.500" fill="#f4f8f8" stroke="#111" stroke-width="1.100"/><path d="M1151.5 75.500V97M1160.5 75.500V97M1142 82.500H1170M1142 89.500H1170" fill="none" stroke="#111" stroke-width="1.100"/><rect x="1151.500" y="82.500" width="20.500" height="7" fill="#62a5dd" stroke="#2f62b8" stroke-width="1.100"/><path d="M1160.500 82.500V89.500" stroke="#2f62b8" stroke-width="1.100"/><path d="M1153 84.500H1143.500M1153 87.500H1143.500" stroke="#2f62b8" stroke-width="1"/><path d="M1153.500 85.200H1143V86.800H1153.500Z" fill="#f6f8f8"/><path d="M1146.500 80L1140.500 86L1146.500 92" fill="none" stroke="#3b78c7" stroke-width="1.400"/></svg>
<span class="tx" style="left:1138.0px;top:105.0px;height:16px;line-height:16px;font-size:12px;color:#2b2b2b;letter-spacing:-0.337px;">Insérer</span>
<svg class="ab" style="left:1151.25px;top:126.32499999999999px" width="7.5" height="4.75"><path d="M1 1L3.75 3.75L6.5 1" fill="none" stroke="#262626" stroke-width="1.2"/></svg>
<svg class="ab" style="left:1190px;top:69px" width="36" height="31" viewBox="1190 69 36 31"><rect x="1193.5" y="75.500" width="27.5" height="21.500" fill="#f4f8f8" stroke="#111" stroke-width="1.100"/><path d="M1202.5 75.500V97M1211.5 75.500V97M1193.5 82.500H1221M1193.5 89.500H1221" fill="none" stroke="#111" stroke-width="1.100"/><rect x="1192" y="82.500" width="5" height="7" fill="#c1bdba"/><path d="M1193 82.500H1197.500V89.500H1193" fill="none" stroke="#111" stroke-width="1.100"/><path d="M1197.500 82.500H1211L1214.500 86L1211 89.500H1197.500Z" fill="#62a5dd" stroke="#2f62b8" stroke-width="1.100"/><path d="M1206.500 82.500V89.500" stroke="#2f62b8" stroke-width="1.100"/><path d="M1211 80.700L1222 92M1222 80.700L1211 92" stroke="#d14a3a" stroke-width="1.300"/></svg>
<span class="tx" style="left:1179.0px;top:105.0px;height:16px;line-height:16px;font-size:12px;color:#2b2b2b;letter-spacing:-0.040px;">Supprimer</span>
<svg class="ab" style="left:1202.25px;top:126.32499999999999px" width="7.5" height="4.75"><path d="M1 1L3.75 3.75L6.5 1" fill="none" stroke="#262626" stroke-width="1.2"/></svg>
<svg class="ab" style="left:1241px;top:69px" width="35" height="31" viewBox="1241 69 35 31"><path d="M1250.500 71.500H1265.500M1250.500 70V73.500M1265.500 70V73.500" stroke="#2f62b8" stroke-width="1.100"/><rect x="1244.5" y="75.500" width="27.5" height="21.500" fill="#f4f8f8" stroke="#111" stroke-width="1.100"/><path d="M1251.5 75.500V97M1265 75.500V97M1244.5 82.500H1272M1244.5 89.500H1272" fill="none" stroke="#111" stroke-width="1.100"/><rect x="1251.500" y="82.500" width="13.500" height="7" fill="#62a5dd" stroke="#2f62b8" stroke-width="1.100"/></svg>
<span class="tx" style="left:1239.0px;top:105.0px;height:16px;line-height:16px;font-size:12px;color:#2b2b2b;letter-spacing:-0.003px;">Format</span>
<svg class="ab" style="left:1253.25px;top:126.32499999999999px" width="7.5" height="4.75"><path d="M1 1L3.75 3.75L6.5 1" fill="none" stroke="#262626" stroke-width="1.2"/></svg>
<span class="tx" style="left:1187.5px;top:144.3px;height:16px;line-height:16px;font-size:12px;color:#2b2b2b;letter-spacing:-0.436px;">Cellules</span>
<div class="ab" style="left:1287px;top:68px;width:1px;height:89px;background:#8b8886"></div>
<svg class="ab" style="left:1299px;top:69px" width="17" height="18" viewBox="1299 69 17 18"><path d="M1313 74.500V71.800H1301.500L1308 78L1301.500 84H1313V81.300" fill="none" stroke="#1a1a1a" stroke-width="1.300"/></svg>
<svg class="ab" style="left:1320.75px;top:76.125px" width="7.5" height="4.75"><path d="M1 1L3.75 3.75L6.5 1" fill="none" stroke="#262626" stroke-width="1.2"/></svg>
<svg class="ab" style="left:1297px;top:92px" width="20" height="18" viewBox="1297 92 20 18"><rect x="1299.500" y="94.800" width="15" height="12.500" fill="#f4f8f8" stroke="#111" stroke-width="1.200"/><path d="M1299.500 97H1314.500" stroke="#111" stroke-width="1"/><path d="M1307 99V104.500M1304.500 102L1307 104.500L1309.500 102" fill="none" stroke="#2f6fd0" stroke-width="1.200"/></svg>
<svg class="ab" style="left:1318.85px;top:99.025px" width="7.5" height="4.75"><path d="M1 1L3.75 3.75L6.5 1" fill="none" stroke="#262626" stroke-width="1.2"/></svg>
<svg class="ab" style="left:1297px;top:114px" width="20" height="20" viewBox="1297 114 20 20"><path d="M1299.800 126L1308.500 117L1313.800 122L1305 131.200Z" fill="#f6f8f8" stroke="#9a2c9c" stroke-width="1.300"/><path d="M1299.800 126L1303.500 122.200L1308.700 127.300L1305 131.200Z" fill="#b04cb4" stroke="#9a2c9c" stroke-width="1"/></svg>
<svg class="ab" style="left:1318.85px;top:122.125px" width="7.5" height="4.75"><path d="M1 1L3.75 3.75L6.5 1" fill="none" stroke="#262626" stroke-width="1.2"/></svg>
<svg class="ab" style="left:1340px;top:70px" width="33" height="31" viewBox="1340 70 33 31"><text x="1341.600" y="84.500" font-size="16" fill="#3b78c7" font-family="Liberation Sans,sans-serif">A</text><text x="1341.800" y="98.800" font-size="16" fill="#1a1a1a" font-family="Liberation Sans,sans-serif" textLength="9.500" lengthAdjust="spacingAndGlyphs">Z</text><path d="M1354.800 79.800H1369.500V81.500L1364 88V94.300H1360.300V88L1354.800 81.500Z" fill="#f6f8f8" stroke="#1a1a1a" stroke-width="1.200"/></svg>
<span class="tx" style="left:1338.8px;top:105.0px;height:16px;line-height:16px;font-size:12px;color:#2b2b2b;letter-spacing:-0.458px;">Trier et</span>
<span class="tx" style="left:1336.0px;top:121.2px;height:16px;line-height:16px;font-size:12px;color:#2b2b2b;letter-spacing:0.161px;">filtrer</span>
<svg class="ab" style="left:1366.75px;top:127.125px" width="7.5" height="4.75"><path d="M1 1L3.75 3.75L6.5 1" fill="none" stroke="#262626" stroke-width="1.2"/></svg>
<svg class="ab" style="left:1401px;top:70px" width="33" height="33" viewBox="1401 70 33 33"><circle cx="1421.400" cy="82.300" r="10" fill="#f0f4f4" stroke="#1a1a1a" stroke-width="1.200"/><path d="M1414 89.500L1403 100.800" stroke="#1a1a1a" stroke-width="1.300"/></svg>
<span class="tx" style="left:1382.0px;top:105.0px;height:16px;line-height:16px;font-size:12px;color:#2b2b2b;letter-spacing:-0.260px;">Rechercher et</span>
<span class="tx" style="left:1380.0px;top:121.2px;height:16px;line-height:16px;font-size:12px;color:#2b2b2b;letter-spacing:0.023px;">sélectionner</span>
<svg class="ab" style="left:1447.25px;top:127.125px" width="7.5" height="4.75"><path d="M1 1L3.75 3.75L6.5 1" fill="none" stroke="#262626" stroke-width="1.2"/></svg>
<span class="tx" style="left:1358.0px;top:144.3px;height:16px;line-height:16px;font-size:12px;color:#2b2b2b;letter-spacing:0.042px;">Édition</span>
<div class="ab" style="left:1465px;top:68px;width:1px;height:89px;background:#8b8886"></div>
<svg class="ab" style="left:1487px;top:68px" width="37" height="36" viewBox="1487 68 37 36"><rect x="1489.500" y="70.500" width="31.500" height="31" fill="#f4f8f8" stroke="#111" stroke-width="1.200"/><rect x="1490" y="71" width="30.500" height="4" fill="#8c8c8c"/><path d="M1490 75H1520.500" stroke="#333" stroke-width="0.800"/><path d="M1490 84.500H1521M1490 93.500H1521M1499.500 75V101.500M1510.500 75V101.500" fill="none" stroke="#a8acac" stroke-width="1"/><path d="M1511 90.500L1521 101.500" stroke="#111" stroke-width="1.800"/><circle cx="1504" cy="83.300" r="10" fill="#f6f8f8" stroke="#111" stroke-width="1.300"/><rect x="1498.500" y="82" width="3.500" height="5.500" fill="#8a8a8a"/><rect x="1502.300" y="78.300" width="3.500" height="9.200" fill="#fff" stroke="#222" stroke-width="0.800"/><rect x="1506" y="80" width="3.500" height="7.500" fill="#3b86d8"/></svg>
<span class="tx" style="left:1476.0px;top:105.0px;height:16px;line-height:16px;font-size:12px;color:#2b2b2b;letter-spacing:-0.237px;">Analyse de</span>
<span class="tx" style="left:1482.0px;top:121.2px;height:16px;line-height:16px;font-size:12px;color:#2b2b2b;letter-spacing:-0.150px;">données</span>
<span class="tx" style="left:1484.0px;top:144.3px;height:16px;line-height:16px;font-size:12px;color:#2b2b2b;letter-spacing:-0.461px;">Analysis</span>
<div class="ab" style="left:1543px;top:68px;width:1px;height:89px;background:#8b8886"></div>
<svg class="ab" style="left:1584px;top:66px" width="36" height="37" viewBox="1584 66 36 37"><rect x="1587.500" y="72.500" width="20" height="27" fill="#dedcda" stroke="#b3b1af" stroke-width="1"/><g transform="rotate(-45 1601 83)"><rect x="1588" y="78.500" width="18" height="9" fill="#dedcda" stroke="#b3b1af" stroke-width="1"/><rect x="1590.500" y="81" width="11" height="4" fill="none" stroke="#b3b1af"/><rect x="1606" y="77" width="6" height="12" fill="#bdbbb9"/><rect x="1613.500" y="80" width="5" height="6" fill="#dedcda" stroke="#b3b1af"/></g></svg>
<span class="tx" style="left:1571.0px;top:105.0px;height:16px;line-height:16px;font-size:12px;color:#8d8a88;letter-spacing:-0.116px;">Niveau de</span>
<span class="tx" style="left:1554.0px;top:121.2px;height:16px;line-height:16px;font-size:12px;color:#8d8a88;letter-spacing:0.107px;">confidentialité</span>
<svg class="ab" style="left:1630.25px;top:127.125px" width="7.5" height="4.75"><path d="M1 1L3.75 3.75L6.5 1" fill="none" stroke="#8d8a88" stroke-width="1.2"/></svg>
<span class="tx" style="left:1559.0px;top:144.3px;height:16px;line-height:16px;font-size:12px;color:#2b2b2b;letter-spacing:0.062px;">Confidentialité</span>
<div class="ab" style="left:1651px;top:68px;width:1px;height:89px;background:#8b8886"></div>
<svg class="ab" style="left:1660px;top:149px" width="12" height="8" viewBox="0 0 12 8"><path d="M1.500 6.500L6 2L10.500 6.500" fill="none" stroke="#222" stroke-width="1.300"/></svg>
<div class="ab" style="left:0;top:161px;width:1680px;height:46px;background:#666"></div>
<div class="ab" style="left:0;top:161px;width:1680px;height:5px;background:linear-gradient(#3c3c3c,#505050 40%,#666)"></div>
<div class="ab" style="left:5px;top:171px;width:100px;height:24px;background:#b4b4b4;border:1px solid #454545;border-radius:1px"></div>
<span class="tx" style="left:12.5px;top:176.5px;height:16px;line-height:16px;font-size:12.5px;color:#444;letter-spacing:-0.250px;">P20</span>
<svg class="ab" style="left:92px;top:181px" width="9" height="6"><path d="M0.500 0.500H8.500L4.500 5Z" fill="#444"/></svg>
<div class="ab" style="left:121px;top:178px;width:2px;height:2px;background:#d0d0d0"></div>
<div class="ab" style="left:121px;top:183px;width:2px;height:2px;background:#d0d0d0"></div>
<div class="ab" style="left:121px;top:188px;width:2px;height:2px;background:#d0d0d0"></div>
<div class="ab" style="left:137px;top:171px;width:108px;height:24px;background:#b4b4b4;border:1px solid #454545;border-radius:1px"></div>
<svg class="ab" style="left:150px;top:178px" width="12" height="12" viewBox="0 0 12 12"><path d="M1 1.500L11 10.800M11 1.500L1 10.800" stroke="#8a8a8a" stroke-width="1.300"/></svg>
<svg class="ab" style="left:185px;top:178px" width="15" height="13" viewBox="0 0 15 13"><path d="M1.500 6.500L5.500 10.500L13.500 1.800" fill="none" stroke="#8a8a8a" stroke-width="2"/></svg>
<div class="ab" style="left:223px;top:174px;width:16px;height:18px;font:italic bold 15px 'Liberation Serif',serif;color:#2a2a2a;letter-spacing:-0.5px;line-height:18px">f<span style="font-size:11px">x</span></div>
<div class="ab" style="left:250px;top:171px;width:1422px;height:24px;background:#b4b4b4;border:1px solid #454545;border-radius:1px"></div>
<svg class="ab" style="left:1662.0px;top:180.75px" width="9" height="5.5"><path d="M1 1L4.5 4.5L8 1" fill="none" stroke="#222" stroke-width="1.6"/></svg>
<div id="grid" style="left:0px;top:207px;width:1659px;height:753px">
<div class="ab" style="left:23px;top:15px;width:1636px;height:738px;background:#fff"></div>
<div class="vl" style="left:71px;top:15px;height:753px"></div>
<div class="vl" style="left:131px;top:15px;height:753px"></div>
<div class="vl" style="left:220px;top:15px;height:753px"></div>
<div class="vl" style="left:309px;top:15px;height:753px"></div>
<div class="vl" style="left:386px;top:15px;height:753px"></div>
<div class="vl" style="left:563px;top:15px;height:753px"></div>
<div class="vl" style="left:631px;top:15px;height:753px"></div>
<div class="vl" style="left:699px;top:15px;height:753px"></div>
<div class="vl" style="left:776px;top:15px;height:753px"></div>
<div class="vl" style="left:844px;top:15px;height:753px"></div>
<div class="vl" style="left:912px;top:15px;height:753px"></div>
<div class="vl" style="left:980px;top:15px;height:753px"></div>
<div class="vl" style="left:1048px;top:15px;height:753px"></div>
<div class="vl" style="left:1116px;top:15px;height:753px"></div>
<div class="vl" style="left:1184px;top:15px;height:753px"></div>
<div class="vl" style="left:1265px;top:15px;height:753px"></div>
<div class="vl" style="left:1333px;top:15px;height:753px"></div>
<div class="vl" style="left:1401px;top:15px;height:753px"></div>
<div class="vl" style="left:1469px;top:15px;height:753px"></div>
<div class="vl" style="left:1537px;top:15px;height:753px"></div>
<div class="vl" style="left:1605px;top:15px;height:753px"></div>
<div class="hl" style="left:23px;top:32px;width:1636px"></div>
<div class="hl" style="left:23px;top:46px;width:1636px"></div>
<div class="hl" style="left:23px;top:60px;width:1636px"></div>
<div class="hl" style="left:23px;top:74px;width:1636px"></div>
<div class="hl" style="left:23px;top:88px;width:1636px"></div>
<div class="hl" style="left:23px;top:102px;width:1636px"></div>
<div class="hl" style="left:23px;top:116px;width:1636px"></div>
<div class="hl" style="left:23px;top:130px;width:1636px"></div>
<div class="hl" style="left:23px;top:144px;width:1636px"></div>
<div class="hl" style="left:23px;top:158px;width:1636px"></div>
<div class="hl" style="left:23px;top:172px;width:1636px"></div>
<div class="hl" style="left:23px;top:186px;width:1636px"></div>
<div class="hl" style="left:23px;top:200px;width:1636px"></div>
<div class="hl" style="left:23px;top:214px;width:1636px"></div>
<div class="hl" style="left:23px;top:228px;width:1636px"></div>
<div class="hl" style="left:23px;top:242px;width:1636px"></div>
<div class="hl" style="left:23px;top:256px;width:1636px"></div>
<div class="hl" style="left:23px;top:270px;width:1636px"></div>
<div class="hl" style="left:23px;top:284px;width:1636px"></div>
<div class="hl" style="left:23px;top:298px;width:1636px"></div>
<div class="hl" style="left:23px;top:312px;width:1636px"></div>
<div class="hl" style="left:23px;top:326px;width:1636px"></div>
<div class="hl" style="left:23px;top:340px;width:1636px"></div>
<div class="hl" style="left:23px;top:354px;width:1636px"></div>
<div class="hl" style="left:23px;top:368px;width:1636px"></div>
<div class="hl" style="left:23px;top:382px;width:1636px"></div>
<div class="hl" style="left:23px;top:396px;width:1636px"></div>
<div class="hl" style="left:23px;top:410px;width:1636px"></div>
<div class="hl" style="left:23px;top:424px;width:1636px"></div>
<div class="hl" style="left:23px;top:438px;width:1636px"></div>
<div class="hl" style="left:23px;top:452px;width:1636px"></div>
<div class="hl" style="left:23px;top:466px;width:1636px"></div>
<div class="hl" style="left:23px;top:480px;width:1636px"></div>
<div class="hl" style="left:23px;top:494px;width:1636px"></div>
<div class="hl" style="left:23px;top:508px;width:1636px"></div>
<div class="hl" style="left:23px;top:522px;width:1636px"></div>
<div class="hl" style="left:23px;top:536px;width:1636px"></div>
<div class="hl" style="left:23px;top:550px;width:1636px"></div>
<div class="hl" style="left:23px;top:564px;width:1636px"></div>
<div class="hl" style="left:23px;top:578px;width:1636px"></div>
<div class="hl" style="left:23px;top:592px;width:1636px"></div>
<div class="hl" style="left:23px;top:606px;width:1636px"></div>
<div class="hl" style="left:23px;top:620px;width:1636px"></div>
<div class="hl" style="left:23px;top:634px;width:1636px"></div>
<div class="hl" style="left:23px;top:648px;width:1636px"></div>
<div class="hl" style="left:23px;top:662px;width:1636px"></div>
<div class="hl" style="left:23px;top:676px;width:1636px"></div>
<div class="hl" style="left:23px;top:690px;width:1636px"></div>
<div class="hl" style="left:23px;top:704px;width:1636px"></div>
<div class="hl" style="left:23px;top:718px;width:1636px"></div>
<div class="hl" style="left:23px;top:732px;width:1636px"></div>
<div class="hl" style="left:23px;top:746px;width:1636px"></div>
<div class="hl" style="left:23px;top:760px;width:1636px"></div>
<div class="ab" style="left:387px;top:33px;width:177px;height:753px;background:#b8cce4"></div>
<div class="ab" style="left:845px;top:33px;width:68px;height:14px;background:#ffc7ce"></div>
<div class="ab" style="left:845px;top:47px;width:68px;height:14px;background:#ffeb9c"></div>
<div class="ab" style="left:845px;top:61px;width:68px;height:14px;background:#c6efce"></div>
<div class="ab" style="left:845px;top:75px;width:68px;height:14px;background:#f79646"></div>
<div class="ab" style="left:845px;top:89px;width:68px;height:14px;background:#95b3d7"></div>
<div class="ab" style="left:845px;top:103px;width:68px;height:14px;background:#da9694"></div>
<div class="ab" style="left:845px;top:201px;width:68px;height:14px;background:#ffc7ce"></div>
<div class="ab" style="left:845px;top:215px;width:68px;height:14px;background:#ffeb9c"></div>
<div class="ab" style="left:845px;top:229px;width:68px;height:14px;background:#c6efce"></div>
<div class="ab" style="left:845px;top:243px;width:68px;height:14px;background:#f79646"></div>
<div class="ab" style="left:845px;top:257px;width:68px;height:14px;background:#95b3d7"></div>
<div class="ab" style="left:845px;top:271px;width:68px;height:14px;background:#da9694"></div>
<div class="ab" style="left:845px;top:369px;width:68px;height:14px;background:#ffc7ce"></div>
<div class="ab" style="left:845px;top:383px;width:68px;height:14px;background:#ffeb9c"></div>
<div class="ab" style="left:845px;top:397px;width:68px;height:14px;background:#c6efce"></div>
<div class="ab" style="left:845px;top:411px;width:68px;height:14px;background:#f79646"></div>
<div class="ab" style="left:845px;top:425px;width:68px;height:14px;background:#95b3d7"></div>
<div class="ab" style="left:845px;top:439px;width:68px;height:14px;background:#da9694"></div>
<div class="ab" style="left:845px;top:537px;width:68px;height:14px;background:#ffc7ce"></div>
<div class="ab" style="left:845px;top:551px;width:68px;height:14px;background:#ffeb9c"></div>
<div class="ab" style="left:845px;top:565px;width:68px;height:14px;background:#c6efce"></div>
<div class="ab" style="left:845px;top:579px;width:68px;height:14px;background:#f79646"></div>
<div class="ab" style="left:845px;top:593px;width:68px;height:14px;background:#95b3d7"></div>
<div class="ab" style="left:845px;top:607px;width:68px;height:14px;background:#da9694"></div>
<div class="ab" style="left:845px;top:705px;width:68px;height:14px;background:#ffc7ce"></div>
<div class="ab" style="left:845px;top:719px;width:68px;height:14px;background:#ffeb9c"></div>
<div class="ab" style="left:845px;top:733px;width:68px;height:14px;background:#c6efce"></div>
<div class="ab" style="left:845px;top:747px;width:68px;height:14px;background:#f79646"></div>
<div class="ab" style="left:23px;top:33px;width:48px;height:753px;background:#fff"></div>
<div class="bh" style="left:23px;top:32px;width:1636px"></div>
<div class="bv" style="left:71px;top:15px;height:18px"></div>
<div class="bv" style="left:131px;top:15px;height:18px"></div>
<div class="bv" style="left:220px;top:15px;height:18px"></div>
<div class="bv" style="left:309px;top:15px;height:18px"></div>
<div class="bv" style="left:386px;top:15px;height:18px"></div>
<div class="bv" style="left:563px;top:15px;height:18px"></div>
<div class="bv" style="left:631px;top:15px;height:18px"></div>
<div class="bv" style="left:699px;top:15px;height:18px"></div>
<div class="bv" style="left:776px;top:15px;height:18px"></div>
<div class="bv" style="left:844px;top:15px;height:18px"></div>
<div class="bv" style="left:912px;top:15px;height:18px"></div>
<div class="bv" style="left:980px;top:15px;height:18px"></div>
<div class="bv" style="left:1048px;top:15px;height:18px"></div>
<div class="bv" style="left:1116px;top:15px;height:18px"></div>
<div class="bv" style="left:1184px;top:15px;height:18px"></div>
<div class="bv" style="left:1265px;top:15px;height:18px"></div>
<div class="bv" style="left:1333px;top:15px;height:18px"></div>
<div class="bv" style="left:1401px;top:15px;height:18px"></div>
<div class="bv" style="left:1469px;top:15px;height:18px"></div>
<div class="bv" style="left:1537px;top:15px;height:18px"></div>
<div class="bv" style="left:1605px;top:15px;height:18px"></div>
<div class="bv" style="left:71px;top:15px;height:753px"></div>
<div class="bv" style="left:131px;top:15px;height:753px"></div>
<div class="bv" style="left:220px;top:15px;height:753px"></div>
<div class="bv" style="left:309px;top:15px;height:753px"></div>
<div class="bv" style="left:386px;top:15px;height:753px"></div>
<div class="bh" style="left:72px;top:46px;width:492px"></div>
<div class="bh" style="left:72px;top:60px;width:492px"></div>
<div class="bh" style="left:72px;top:74px;width:492px"></div>
<div class="bh" style="left:72px;top:88px;width:492px"></div>
<div class="bh" style="left:72px;top:102px;width:492px"></div>
<div class="bh" style="left:72px;top:116px;width:492px"></div>
<div class="bh" style="left:72px;top:130px;width:492px"></div>
<div class="bh" style="left:72px;top:144px;width:492px"></div>
<div class="bh" style="left:72px;top:158px;width:492px"></div>
<div class="bh" style="left:72px;top:172px;width:492px"></div>
<div class="bh" style="left:72px;top:186px;width:492px"></div>
<div class="bh" style="left:72px;top:200px;width:492px"></div>
<div class="bh" style="left:23px;top:200px;width:49px"></div>
<div class="bh" style="left:72px;top:214px;width:492px"></div>
<div class="bh" style="left:72px;top:228px;width:492px"></div>
<div class="bh" style="left:72px;top:242px;width:492px"></div>
<div class="bh" style="left:72px;top:256px;width:492px"></div>
<div class="bh" style="left:72px;top:270px;width:492px"></div>
<div class="bh" style="left:72px;top:284px;width:492px"></div>
<div class="bh" style="left:72px;top:298px;width:492px"></div>
<div class="bh" style="left:72px;top:312px;width:492px"></div>
<div class="bh" style="left:72px;top:326px;width:492px"></div>
<div class="bh" style="left:72px;top:340px;width:492px"></div>
<div class="bh" style="left:72px;top:354px;width:492px"></div>
<div class="bh" style="left:72px;top:368px;width:492px"></div>
<div class="bh" style="left:23px;top:368px;width:49px"></div>
<div class="bh" style="left:72px;top:382px;width:492px"></div>
<div class="bh" style="left:72px;top:396px;width:492px"></div>
<div class="bh" style="left:72px;top:410px;width:492px"></div>
<div class="bh" style="left:72px;top:424px;width:492px"></div>
<div class="bh" style="left:72px;top:438px;width:492px"></div>
<div class="bh" style="left:72px;top:452px;width:492px"></div>
<div class="bh" style="left:72px;top:466px;width:492px"></div>
<div class="bh" style="left:72px;top:480px;width:492px"></div>
<div class="bh" style="left:72px;top:494px;width:492px"></div>
<div class="bh" style="left:72px;top:508px;width:492px"></div>
<div class="bh" style="left:72px;top:522px;width:492px"></div>
<div class="bh" style="left:72px;top:536px;width:492px"></div>
<div class="bh" style="left:23px;top:536px;width:49px"></div>
<div class="bh" style="left:72px;top:550px;width:492px"></div>
<div class="bh" style="left:72px;top:564px;width:492px"></div>
<div class="bh" style="left:72px;top:578px;width:492px"></div>
<div class="bh" style="left:72px;top:592px;width:492px"></div>
<div class="bh" style="left:72px;top:606px;width:492px"></div>
<div class="bh" style="left:72px;top:620px;width:492px"></div>
<div class="bh" style="left:72px;top:634px;width:492px"></div>
<div class="bh" style="left:72px;top:648px;width:492px"></div>
<div class="bh" style="left:72px;top:662px;width:492px"></div>
<div class="bh" style="left:72px;top:676px;width:492px"></div>
<div class="bh" style="left:72px;top:690px;width:492px"></div>
<div class="bh" style="left:72px;top:704px;width:492px"></div>
<div class="bh" style="left:23px;top:704px;width:49px"></div>
<div class="bh" style="left:72px;top:718px;width:492px"></div>
<div class="bh" style="left:72px;top:732px;width:492px"></div>
<div class="bh" style="left:72px;top:746px;width:492px"></div>
<div class="bh" style="left:72px;top:760px;width:492px"></div>
<div class="h1 h1A" style="left:23px;top:15px;width:48px">Année</div>
<div class="h1 h1B" style="left:72px;top:15px;width:59px">Mois</div>
<div class="h1 h1C" style="left:132px;top:15px;width:88px">Temps (t²)</div>
<div class="h1 h1D" style="left:221px;top:15px;width:88px">Temps (t)</div>
<div class="h1 h1E" style="left:310px;top:15px;width:76px">Volume (y)</div>
<div class="h1 h1F" style="left:387px;top:15px;width:176px">ft</div>
<div class="h1 h1G" style="left:564px;top:15px;width:67px">et²</div>
<div class="h1 h1H" style="left:632px;top:15px;width:67px">(Yt-<span class="sm">moy(y))²</span></div>
<div class="h1 h1I" style="left:700px;top:15px;width:76px">(ŷ-moy(y))²</div>
<div class="h1 h1J" style="left:777px;top:15px;width:67px">st (yt-ft)</div>
<div class="h1 h1K" style="left:845px;top:15px;width:67px">St</div>
<div class="h1 h1L" style="left:913px;top:15px;width:67px">S't</div>
<div class="h1 h1M" style="left:981px;top:15px;width:67px">CVS</div>
<div class="h1 h1N" style="left:1049px;top:15px;width:67px">ŷ</div>
<div class="h1 h1O" style="left:1117px;top:15px;width:67px">et²</div>
<div class="h1 h1P" style="left:1185px;top:15px;width:80px">Prévisions</div>
<div class="cl" style="left:72px;top:33px;width:59px">Janvier</div>
<div class="cr" style="left:132px;top:33px;width:88px">1</div>
<div class="cr" style="left:221px;top:33px;width:88px">1</div>
<div class="cr" style="left:310px;top:33px;width:76px">51,8</div>
<div class="cr" style="left:387px;top:33px;width:176px">60,44</div>
<div class="cr" style="left:564px;top:33px;width:67px">74,68</div>
<div class="cr" style="left:632px;top:33px;width:67px">619,595069</div>
<div class="cr" style="left:700px;top:33px;width:76px">264,07</div>
<div class="cr" style="left:777px;top:33px;width:67px">-8,64</div>
<div class="cr" style="left:845px;top:33px;width:67px;color:#9c0006">-6,884</div>
<div class="cr" style="left:913px;top:33px;width:67px">-6,884</div>
<div class="cr" style="left:981px;top:33px;width:67px">58,684</div>
<div class="cr" style="left:1049px;top:33px;width:67px">53,558</div>
<div class="cr" style="left:1117px;top:33px;width:67px">3,090</div>
<div class="cl" style="left:72px;top:47px;width:59px">Février</div>
<div class="cr" style="left:132px;top:47px;width:88px">4</div>
<div class="cr" style="left:221px;top:47px;width:88px">2</div>
<div class="cr" style="left:310px;top:47px;width:76px">55</div>
<div class="cr" style="left:387px;top:47px;width:176px">60,45</div>
<div class="cr" style="left:564px;top:47px;width:67px">29,66</div>
<div class="cr" style="left:632px;top:47px;width:67px">470,528403</div>
<div class="cr" style="left:700px;top:47px;width:76px">263,92</div>
<div class="cr" style="left:777px;top:47px;width:67px">-5,45</div>
<div class="cr" style="left:845px;top:47px;width:67px;color:#9c6500">-4,338</div>
<div class="cr" style="left:913px;top:47px;width:67px">-4,338</div>
<div class="cr" style="left:981px;top:47px;width:67px">59,338</div>
<div class="cr" style="left:1049px;top:47px;width:67px">56,107</div>
<div class="cr" style="left:1117px;top:47px;width:67px">1,226</div>
<div class="cl" style="left:72px;top:61px;width:59px">Mars</div>
<div class="cr" style="left:132px;top:61px;width:88px">9</div>
<div class="cr" style="left:221px;top:61px;width:88px">3</div>
<div class="cr" style="left:310px;top:61px;width:76px">63,6</div>
<div class="cr" style="left:387px;top:61px;width:176px">60,45</div>
<div class="cr" style="left:564px;top:61px;width:67px">9,90</div>
<div class="cr" style="left:632px;top:61px;width:67px">171,391736</div>
<div class="cr" style="left:700px;top:61px;width:76px">263,68</div>
<div class="cr" style="left:777px;top:61px;width:67px">3,15</div>
<div class="cr" style="left:845px;top:61px;width:67px;color:#006100">8,170</div>
<div class="cr" style="left:913px;top:61px;width:67px">8,170</div>
<div class="cr" style="left:981px;top:61px;width:67px">55,430</div>
<div class="cr" style="left:1049px;top:61px;width:67px">68,624</div>
<div class="cr" style="left:1117px;top:61px;width:67px">25,239</div>
<div class="cl" style="left:72px;top:75px;width:59px">Avril</div>
<div class="cr" style="left:132px;top:75px;width:88px">16</div>
<div class="cr" style="left:221px;top:75px;width:88px">4</div>
<div class="cr" style="left:310px;top:75px;width:76px">58,4</div>
<div class="cr" style="left:387px;top:75px;width:176px">60,46</div>
<div class="cr" style="left:564px;top:75px;width:67px">4,26</div>
<div class="cr" style="left:632px;top:75px;width:67px">334,585069</div>
<div class="cr" style="left:700px;top:75px;width:76px">263,34</div>
<div class="cr" style="left:777px;top:75px;width:67px">-2,06</div>
<div class="cr" style="left:845px;top:75px;width:67px">1,770</div>
<div class="cr" style="left:913px;top:75px;width:67px">1,770</div>
<div class="cr" style="left:981px;top:75px;width:67px">56,630</div>
<div class="cr" style="left:1049px;top:75px;width:67px">62,233</div>
<div class="cr" style="left:1117px;top:75px;width:67px">14,696</div>
<div class="cl" style="left:72px;top:89px;width:59px">Mai</div>
<div class="cr" style="left:132px;top:89px;width:88px">25</div>
<div class="cr" style="left:221px;top:89px;width:88px">5</div>
<div class="cr" style="left:310px;top:89px;width:76px">59,3</div>
<div class="cr" style="left:387px;top:89px;width:176px">60,48</div>
<div class="cr" style="left:564px;top:89px;width:67px">1,39</div>
<div class="cr" style="left:632px;top:89px;width:67px">302,470069</div>
<div class="cr" style="left:700px;top:89px;width:76px">262,91</div>
<div class="cr" style="left:777px;top:89px;width:67px">-1,18</div>
<div class="cr" style="left:845px;top:89px;width:67px">-0,434</div>
<div class="cr" style="left:913px;top:89px;width:67px">-0,434</div>
<div class="cr" style="left:981px;top:89px;width:67px">59,734</div>
<div class="cr" style="left:1049px;top:89px;width:67px">60,043</div>
<div class="cr" style="left:1117px;top:89px;width:67px">0,552</div>
<div class="cl" style="left:72px;top:103px;width:59px">Juin</div>
<div class="cr" style="left:132px;top:103px;width:88px">36</div>
<div class="cr" style="left:221px;top:103px;width:88px">6</div>
<div class="cr" style="left:310px;top:103px;width:76px">57,1</div>
<div class="cr" style="left:387px;top:103px;width:176px">60,49</div>
<div class="cr" style="left:564px;top:103px;width:67px">11,52</div>
<div class="cr" style="left:632px;top:103px;width:67px">383,833403</div>
<div class="cr" style="left:700px;top:103px;width:76px">262,38</div>
<div class="cr" style="left:777px;top:103px;width:67px">-3,39</div>
<div class="cr" style="left:845px;top:103px;width:67px">-0,061</div>
<div class="cr" style="left:913px;top:103px;width:67px">-0,061</div>
<div class="cr" style="left:981px;top:103px;width:67px">57,161</div>
<div class="cr" style="left:1049px;top:103px;width:67px">60,433</div>
<div class="cr" style="left:1117px;top:103px;width:67px">11,108</div>
<div class="cl" style="left:72px;top:117px;width:59px">Juillet</div>
<div class="cr" style="left:132px;top:117px;width:88px">49</div>
<div class="cr" style="left:221px;top:117px;width:88px">7</div>
<div class="cr" style="left:310px;top:117px;width:76px">54,5</div>
<div class="cr" style="left:387px;top:117px;width:176px">60,51</div>
<div class="cr" style="left:564px;top:117px;width:67px">36,16</div>
<div class="cr" style="left:632px;top:117px;width:67px">492,470069</div>
<div class="cr" style="left:700px;top:117px;width:76px">261,75</div>
<div class="cr" style="left:777px;top:117px;width:67px">-6,01</div>
<div class="cr" style="left:845px;top:117px;width:67px">-0,064</div>
<div class="cr" style="left:913px;top:117px;width:67px">-0,064</div>
<div class="cr" style="left:981px;top:117px;width:67px">54,564</div>
<div class="cr" style="left:1049px;top:117px;width:67px">60,449</div>
<div class="cr" style="left:1117px;top:117px;width:67px">35,393</div>
<div class="cl" style="left:72px;top:131px;width:59px">Août</div>
<div class="cr" style="left:132px;top:131px;width:88px">64</div>
<div class="cr" style="left:221px;top:131px;width:88px">8</div>
<div class="cr" style="left:310px;top:131px;width:76px">48,8</div>
<div class="cr" style="left:387px;top:131px;width:176px">60,54</div>
<div class="cr" style="left:564px;top:131px;width:67px">137,72</div>
<div class="cr" style="left:632px;top:131px;width:67px">777,945069</div>
<div class="cr" style="left:700px;top:131px;width:76px">261,03</div>
<div class="cr" style="left:777px;top:131px;width:67px">-11,74</div>
<div class="cr" style="left:845px;top:131px;width:67px">-7,750</div>
<div class="cr" style="left:913px;top:131px;width:67px">-7,750</div>
<div class="cr" style="left:981px;top:131px;width:67px">56,550</div>
<div class="cr" style="left:1049px;top:131px;width:67px">52,786</div>
<div class="cr" style="left:1117px;top:131px;width:67px">15,885</div>
<div class="cl" style="left:72px;top:145px;width:59px">Septembre</div>
<div class="cr" style="left:132px;top:145px;width:88px">81</div>
<div class="cr" style="left:221px;top:145px;width:88px">9</div>
<div class="cr" style="left:310px;top:145px;width:76px">52,9</div>
<div class="cr" style="left:387px;top:145px;width:176px">60,56</div>
<div class="cr" style="left:564px;top:145px;width:67px">58,69</div>
<div class="cr" style="left:632px;top:145px;width:67px">566,043403</div>
<div class="cr" style="left:700px;top:145px;width:76px">260,21</div>
<div class="cr" style="left:777px;top:145px;width:67px">-7,66</div>
<div class="cr" style="left:845px;top:145px;width:67px">-1,625</div>
<div class="cr" style="left:913px;top:145px;width:67px">-1,625</div>
<div class="cr" style="left:981px;top:145px;width:67px">54,525</div>
<div class="cr" style="left:1049px;top:145px;width:67px">58,935</div>
<div class="cr" style="left:1117px;top:145px;width:67px">36,424</div>
<div class="cl" style="left:72px;top:159px;width:59px">Octobre</div>
<div class="cr" style="left:132px;top:159px;width:88px">100</div>
<div class="cr" style="left:221px;top:159px;width:88px">10</div>
<div class="cr" style="left:310px;top:159px;width:76px">58,5</div>
<div class="cr" style="left:387px;top:159px;width:176px">60,59</div>
<div class="cr" style="left:564px;top:159px;width:67px">4,36</div>
<div class="cr" style="left:632px;top:159px;width:67px">330,936736</div>
<div class="cr" style="left:700px;top:159px;width:76px">259,30</div>
<div class="cr" style="left:777px;top:159px;width:67px">-2,09</div>
<div class="cr" style="left:845px;top:159px;width:67px">2,289</div>
<div class="cr" style="left:913px;top:159px;width:67px">2,289</div>
<div class="cr" style="left:981px;top:159px;width:67px">56,211</div>
<div class="cr" style="left:1049px;top:159px;width:67px">62,878</div>
<div class="cr" style="left:1117px;top:159px;width:67px">19,169</div>
<div class="cl" style="left:72px;top:173px;width:59px">Novembre</div>
<div class="cr" style="left:132px;top:173px;width:88px">121</div>
<div class="cr" style="left:221px;top:173px;width:88px">11</div>
<div class="cr" style="left:310px;top:173px;width:76px">57</div>
<div class="cr" style="left:387px;top:173px;width:176px">60,62</div>
<div class="cr" style="left:564px;top:173px;width:67px">13,11</div>
<div class="cr" style="left:632px;top:173px;width:67px">387,761736</div>
<div class="cr" style="left:700px;top:173px;width:76px">258,29</div>
<div class="cr" style="left:777px;top:173px;width:67px">-3,62</div>
<div class="cr" style="left:845px;top:173px;width:67px">2,441</div>
<div class="cr" style="left:913px;top:173px;width:67px">2,441</div>
<div class="cr" style="left:981px;top:173px;width:67px">54,559</div>
<div class="cr" style="left:1049px;top:173px;width:67px">63,061</div>
<div class="cr" style="left:1117px;top:173px;width:67px">36,739</div>
<div class="cl" style="left:72px;top:187px;width:59px">Décembre</div>
<div class="cr" style="left:132px;top:187px;width:88px">144</div>
<div class="cr" style="left:221px;top:187px;width:88px">12</div>
<div class="cr" style="left:310px;top:187px;width:76px">66,9</div>
<div class="cr" style="left:387px;top:187px;width:176px">60,65</div>
<div class="cr" style="left:564px;top:187px;width:67px">39,01</div>
<div class="cr" style="left:632px;top:187px;width:67px">95,8767361</div>
<div class="cr" style="left:700px;top:187px;width:76px">257,19</div>
<div class="cr" style="left:777px;top:187px;width:67px">6,25</div>
<div class="cr" style="left:845px;top:187px;width:67px">6,790</div>
<div class="cr" style="left:913px;top:187px;width:67px">6,790</div>
<div class="cr" style="left:981px;top:187px;width:67px">60,110</div>
<div class="cr" style="left:1049px;top:187px;width:67px">67,444</div>
<div class="cr" style="left:1117px;top:187px;width:67px">0,296</div>
<div class="cl" style="left:72px;top:201px;width:59px">Janvier</div>
<div class="cr" style="left:132px;top:201px;width:88px">169</div>
<div class="cr" style="left:221px;top:201px;width:88px">13</div>
<div class="cr" style="left:310px;top:201px;width:76px">53,6</div>
<div class="cr" style="left:387px;top:201px;width:176px">60,69</div>
<div class="cr" style="left:564px;top:201px;width:67px">50,29</div>
<div class="cr" style="left:632px;top:201px;width:67px">533,225069</div>
<div class="cr" style="left:700px;top:201px;width:76px">256,00</div>
<div class="cr" style="left:777px;top:201px;width:67px">-7,09</div>
<div class="cr" style="left:845px;top:201px;width:67px;color:#9c0006">-6,884</div>
<div class="cr" style="left:913px;top:201px;width:67px">-6,884</div>
<div class="cr" style="left:981px;top:201px;width:67px">60,484</div>
<div class="cr" style="left:1049px;top:201px;width:67px">53,808</div>
<div class="cr" style="left:1117px;top:201px;width:67px">0,043</div>
<div class="cl" style="left:72px;top:215px;width:59px">Février</div>
<div class="cr" style="left:132px;top:215px;width:88px">196</div>
<div class="cr" style="left:221px;top:215px;width:88px">14</div>
<div class="cr" style="left:310px;top:215px;width:76px">54,3</div>
<div class="cr" style="left:387px;top:215px;width:176px">60,73</div>
<div class="cr" style="left:564px;top:215px;width:67px">41,37</div>
<div class="cr" style="left:632px;top:215px;width:67px">501,386736</div>
<div class="cr" style="left:700px;top:215px;width:76px">254,71</div>
<div class="cr" style="left:777px;top:215px;width:67px">-6,43</div>
<div class="cr" style="left:845px;top:215px;width:67px;color:#9c6500">-4,338</div>
<div class="cr" style="left:913px;top:215px;width:67px">-4,338</div>
<div class="cr" style="left:981px;top:215px;width:67px">58,638</div>
<div class="cr" style="left:1049px;top:215px;width:67px">56,394</div>
<div class="cr" style="left:1117px;top:215px;width:67px">4,383</div>
<div class="cl" style="left:72px;top:229px;width:59px">Mars</div>
<div class="cr" style="left:132px;top:229px;width:88px">225</div>
<div class="cr" style="left:221px;top:229px;width:88px">15</div>
<div class="cr" style="left:310px;top:229px;width:76px">66</div>
<div class="cr" style="left:387px;top:229px;width:176px">60,78</div>
<div class="cr" style="left:564px;top:229px;width:67px">27,30</div>
<div class="cr" style="left:632px;top:229px;width:67px">114,311736</div>
<div class="cr" style="left:700px;top:229px;width:76px">253,33</div>
<div class="cr" style="left:777px;top:229px;width:67px">5,22</div>
<div class="cr" style="left:845px;top:229px;width:67px;color:#006100">8,170</div>
<div class="cr" style="left:913px;top:229px;width:67px">8,170</div>
<div class="cr" style="left:981px;top:229px;width:67px">57,830</div>
<div class="cr" style="left:1049px;top:229px;width:67px">68,946</div>
<div class="cr" style="left:1117px;top:229px;width:67px">8,677</div>
<div class="cl" style="left:72px;top:243px;width:59px">Avril</div>
<div class="cr" style="left:132px;top:243px;width:88px">256</div>
<div class="cr" style="left:221px;top:243px;width:88px">16</div>
<div class="cr" style="left:310px;top:243px;width:76px">60,8</div>
<div class="cr" style="left:387px;top:243px;width:176px">60,82</div>
<div class="cr" style="left:564px;top:243px;width:67px">0,00</div>
<div class="cr" style="left:632px;top:243px;width:67px">252,545069</div>
<div class="cr" style="left:700px;top:243px;width:76px">251,86</div>
<div class="cr" style="left:777px;top:243px;width:67px">-0,02</div>
<div class="cr" style="left:845px;top:243px;width:67px">1,770</div>
<div class="cr" style="left:913px;top:243px;width:67px">1,770</div>
<div class="cr" style="left:981px;top:243px;width:67px">59,030</div>
<div class="cr" style="left:1049px;top:243px;width:67px">62,591</div>
<div class="cr" style="left:1117px;top:243px;width:67px">3,208</div>
<div class="cl" style="left:72px;top:257px;width:59px">Mai</div>
<div class="cr" style="left:132px;top:257px;width:88px">289</div>
<div class="cr" style="left:221px;top:257px;width:88px">17</div>
<div class="cr" style="left:310px;top:257px;width:76px">62,2</div>
<div class="cr" style="left:387px;top:257px;width:176px">60,87</div>
<div class="cr" style="left:564px;top:257px;width:67px">1,77</div>
<div class="cr" style="left:632px;top:257px;width:67px">210,008403</div>
<div class="cr" style="left:700px;top:257px;width:76px">250,31</div>
<div class="cr" style="left:777px;top:257px;width:67px">1,33</div>
<div class="cr" style="left:845px;top:257px;width:67px">-0,434</div>
<div class="cr" style="left:913px;top:257px;width:67px">-0,434</div>
<div class="cr" style="left:981px;top:257px;width:67px">62,634</div>
<div class="cr" style="left:1049px;top:257px;width:67px">60,437</div>
<div class="cr" style="left:1117px;top:257px;width:67px">3,110</div>
<div class="cl" style="left:72px;top:271px;width:59px">Juin</div>
<div class="cr" style="left:132px;top:271px;width:88px">324</div>
<div class="cr" style="left:221px;top:271px;width:88px">18</div>
<div class="cr" style="left:310px;top:271px;width:76px">61,3</div>
<div class="cr" style="left:387px;top:271px;width:176px">60,92</div>
<div class="cr" style="left:564px;top:271px;width:67px">0,14</div>
<div class="cr" style="left:632px;top:271px;width:67px">236,903403</div>
<div class="cr" style="left:700px;top:271px;width:76px">248,66</div>
<div class="cr" style="left:777px;top:271px;width:67px">0,38</div>
<div class="cr" style="left:845px;top:271px;width:67px">-0,061</div>
<div class="cr" style="left:913px;top:271px;width:67px">-0,061</div>
<div class="cr" style="left:981px;top:271px;width:67px">61,361</div>
<div class="cr" style="left:1049px;top:271px;width:67px">60,862</div>
<div class="cr" style="left:1117px;top:271px;width:67px">0,192</div>
<div class="cl" style="left:72px;top:285px;width:59px">Juillet</div>
<div class="cr" style="left:132px;top:285px;width:88px">361</div>
<div class="cr" style="left:221px;top:285px;width:88px">19</div>
<div class="cr" style="left:310px;top:285px;width:76px">57,6</div>
<div class="cr" style="left:387px;top:285px;width:176px">60,98</div>
<div class="cr" style="left:564px;top:285px;width:67px">11,41</div>
<div class="cr" style="left:632px;top:285px;width:67px">364,491736</div>
<div class="cr" style="left:700px;top:285px;width:76px">246,92</div>
<div class="cr" style="left:777px;top:285px;width:67px">-3,38</div>
<div class="cr" style="left:845px;top:285px;width:67px">-0,064</div>
<div class="cr" style="left:913px;top:285px;width:67px">-0,064</div>
<div class="cr" style="left:981px;top:285px;width:67px">57,664</div>
<div class="cr" style="left:1049px;top:285px;width:67px">60,914</div>
<div class="cr" style="left:1117px;top:285px;width:67px">10,983</div>
<div class="cl" style="left:72px;top:299px;width:59px">Août</div>
<div class="cr" style="left:132px;top:299px;width:88px">400</div>
<div class="cr" style="left:221px;top:299px;width:88px">20</div>
<div class="cr" style="left:310px;top:299px;width:76px">52,7</div>
<div class="cr" style="left:387px;top:299px;width:176px">61,04</div>
<div class="cr" style="left:564px;top:299px;width:67px">69,49</div>
<div class="cr" style="left:632px;top:299px;width:67px">575,600069</div>
<div class="cr" style="left:700px;top:299px;width:76px">245,10</div>
<div class="cr" style="left:777px;top:299px;width:67px">-8,34</div>
<div class="cr" style="left:845px;top:299px;width:67px">-7,750</div>
<div class="cr" style="left:913px;top:299px;width:67px">-7,750</div>
<div class="cr" style="left:981px;top:299px;width:67px">60,450</div>
<div class="cr" style="left:1049px;top:299px;width:67px">53,286</div>
<div class="cr" style="left:1117px;top:299px;width:67px">0,344</div>
<div class="cl" style="left:72px;top:313px;width:59px">Septembre</div>
<div class="cr" style="left:132px;top:313px;width:88px">441</div>
<div class="cr" style="left:221px;top:313px;width:88px">21</div>
<div class="cr" style="left:310px;top:313px;width:76px">56,8</div>
<div class="cr" style="left:387px;top:313px;width:176px">61,10</div>
<div class="cr" style="left:564px;top:313px;width:67px">18,46</div>
<div class="cr" style="left:632px;top:313px;width:67px">395,678403</div>
<div class="cr" style="left:700px;top:313px;width:76px">243,19</div>
<div class="cr" style="left:777px;top:313px;width:67px">-4,30</div>
<div class="cr" style="left:845px;top:313px;width:67px">-1,625</div>
<div class="cr" style="left:913px;top:313px;width:67px">-1,625</div>
<div class="cr" style="left:981px;top:313px;width:67px">58,425</div>
<div class="cr" style="left:1049px;top:313px;width:67px">59,472</div>
<div class="cr" style="left:1117px;top:313px;width:67px">7,138</div>
<div class="cl" style="left:72px;top:327px;width:59px">Octobre</div>
<div class="cr" style="left:132px;top:327px;width:88px">484</div>
<div class="cr" style="left:221px;top:327px;width:88px">22</div>
<div class="cr" style="left:310px;top:327px;width:76px">63,7</div>
<div class="cr" style="left:387px;top:327px;width:176px">61,16</div>
<div class="cr" style="left:564px;top:327px;width:67px">6,45</div>
<div class="cr" style="left:632px;top:327px;width:67px">168,783403</div>
<div class="cr" style="left:700px;top:327px;width:76px">241,20</div>
<div class="cr" style="left:777px;top:327px;width:67px">2,54</div>
<div class="cr" style="left:845px;top:327px;width:67px">2,289</div>
<div class="cr" style="left:913px;top:327px;width:67px">2,289</div>
<div class="cr" style="left:981px;top:327px;width:67px">61,411</div>
<div class="cr" style="left:1049px;top:327px;width:67px">63,450</div>
<div class="cr" style="left:1117px;top:327px;width:67px">0,062</div>
<div class="cl" style="left:72px;top:341px;width:59px">Novembre</div>
<div class="cr" style="left:132px;top:341px;width:88px">529</div>
<div class="cr" style="left:221px;top:341px;width:88px">23</div>
<div class="cr" style="left:310px;top:341px;width:76px">62,6</div>
<div class="cr" style="left:387px;top:341px;width:176px">61,23</div>
<div class="cr" style="left:564px;top:341px;width:67px">1,88</div>
<div class="cr" style="left:632px;top:341px;width:67px">198,575069</div>
<div class="cr" style="left:700px;top:341px;width:76px">239,12</div>
<div class="cr" style="left:777px;top:341px;width:67px">1,37</div>
<div class="cr" style="left:845px;top:341px;width:67px">2,441</div>
<div class="cr" style="left:913px;top:341px;width:67px">2,441</div>
<div class="cr" style="left:981px;top:341px;width:67px">60,159</div>
<div class="cr" style="left:1049px;top:341px;width:67px">63,669</div>
<div class="cr" style="left:1117px;top:341px;width:67px">1,143</div>
<div class="cl" style="left:72px;top:355px;width:59px">Décembre</div>
<div class="cr" style="left:132px;top:355px;width:88px">576</div>
<div class="cr" style="left:221px;top:355px;width:88px">24</div>
<div class="cr" style="left:310px;top:355px;width:76px">71,1</div>
<div class="cr" style="left:387px;top:355px;width:176px">61,30</div>
<div class="cr" style="left:564px;top:355px;width:67px">96,07</div>
<div class="cr" style="left:632px;top:355px;width:67px">31,2667361</div>
<div class="cr" style="left:700px;top:355px;width:76px">236,96</div>
<div class="cr" style="left:777px;top:355px;width:67px">9,80</div>
<div class="cr" style="left:845px;top:355px;width:67px">6,790</div>
<div class="cr" style="left:913px;top:355px;width:67px">6,790</div>
<div class="cr" style="left:981px;top:355px;width:67px">64,310</div>
<div class="cr" style="left:1049px;top:355px;width:67px">68,088</div>
<div class="cr" style="left:1117px;top:355px;width:67px">9,073</div>
<div class="cl" style="left:72px;top:369px;width:59px">Janvier</div>
<div class="cr" style="left:132px;top:369px;width:88px">625</div>
<div class="cr" style="left:221px;top:369px;width:88px">25</div>
<div class="cr" style="left:310px;top:369px;width:76px">57,3</div>
<div class="cr" style="left:387px;top:369px;width:176px">61,37</div>
<div class="cr" style="left:564px;top:369px;width:67px">16,58</div>
<div class="cr" style="left:632px;top:369px;width:67px">376,036736</div>
<div class="cr" style="left:700px;top:369px;width:76px">234,72</div>
<div class="cr" style="left:777px;top:369px;width:67px">-4,07</div>
<div class="cr" style="left:845px;top:369px;width:67px;color:#9c0006">-6,884</div>
<div class="cr" style="left:913px;top:369px;width:67px">-6,884</div>
<div class="cr" style="left:981px;top:369px;width:67px">64,184</div>
<div class="cr" style="left:1049px;top:369px;width:67px">54,488</div>
<div class="cr" style="left:1117px;top:369px;width:67px">7,910</div>
<div class="cl" style="left:72px;top:383px;width:59px">Février</div>
<div class="cr" style="left:132px;top:383px;width:88px">676</div>
<div class="cr" style="left:221px;top:383px;width:88px">26</div>
<div class="cr" style="left:310px;top:383px;width:76px">59,2</div>
<div class="cr" style="left:387px;top:383px;width:176px">61,45</div>
<div class="cr" style="left:564px;top:383px;width:67px">5,05</div>
<div class="cr" style="left:632px;top:383px;width:67px">305,958403</div>
<div class="cr" style="left:700px;top:383px;width:76px">232,39</div>
<div class="cr" style="left:777px;top:383px;width:67px">-2,25</div>
<div class="cr" style="left:845px;top:383px;width:67px;color:#9c6500">-4,338</div>
<div class="cr" style="left:913px;top:383px;width:67px">-4,338</div>
<div class="cr" style="left:981px;top:383px;width:67px">63,538</div>
<div class="cr" style="left:1049px;top:383px;width:67px">57,109</div>
<div class="cr" style="left:1117px;top:383px;width:67px">4,373</div>
<div class="cl" style="left:72px;top:397px;width:59px">Mars</div>
<div class="cr" style="left:132px;top:397px;width:88px">729</div>
<div class="cr" style="left:221px;top:397px;width:88px">27</div>
<div class="cr" style="left:310px;top:397px;width:76px">65,6</div>
<div class="cr" style="left:387px;top:397px;width:176px">61,53</div>
<div class="cr" style="left:564px;top:397px;width:67px">16,60</div>
<div class="cr" style="left:632px;top:397px;width:67px">123,025069</div>
<div class="cr" style="left:700px;top:397px;width:76px">229,99</div>
<div class="cr" style="left:777px;top:397px;width:67px">4,07</div>
<div class="cr" style="left:845px;top:397px;width:67px;color:#006100">8,170</div>
<div class="cr" style="left:913px;top:397px;width:67px">8,170</div>
<div class="cr" style="left:981px;top:397px;width:67px">57,430</div>
<div class="cr" style="left:1049px;top:397px;width:67px">69,697</div>
<div class="cr" style="left:1117px;top:397px;width:67px">16,782</div>
<div class="cl" style="left:72px;top:411px;width:59px">Avril</div>
<div class="cr" style="left:132px;top:411px;width:88px">784</div>
<div class="cr" style="left:221px;top:411px;width:88px">28</div>
<div class="cr" style="left:310px;top:411px;width:76px">62</div>
<div class="cr" style="left:387px;top:411px;width:176px">61,61</div>
<div class="cr" style="left:564px;top:411px;width:67px">0,15</div>
<div class="cr" style="left:632px;top:411px;width:67px">215,845069</div>
<div class="cr" style="left:700px;top:411px;width:76px">227,51</div>
<div class="cr" style="left:777px;top:411px;width:67px">0,39</div>
<div class="cr" style="left:845px;top:411px;width:67px">1,770</div>
<div class="cr" style="left:913px;top:411px;width:67px">1,770</div>
<div class="cr" style="left:981px;top:411px;width:67px">60,230</div>
<div class="cr" style="left:1049px;top:411px;width:67px">63,378</div>
<div class="cr" style="left:1117px;top:411px;width:67px">1,898</div>
<div class="cl" style="left:72px;top:425px;width:59px">Mai</div>
<div class="cr" style="left:132px;top:425px;width:88px">841</div>
<div class="cr" style="left:221px;top:425px;width:88px">29</div>
<div class="cr" style="left:310px;top:425px;width:76px">65,2</div>
<div class="cr" style="left:387px;top:425px;width:176px">61,69</div>
<div class="cr" style="left:564px;top:425px;width:67px">12,30</div>
<div class="cr" style="left:632px;top:425px;width:67px">132,058403</div>
<div class="cr" style="left:700px;top:425px;width:76px">224,96</div>
<div class="cr" style="left:777px;top:425px;width:67px">3,51</div>
<div class="cr" style="left:845px;top:425px;width:67px">-0,434</div>
<div class="cr" style="left:913px;top:425px;width:67px">-0,434</div>
<div class="cr" style="left:981px;top:425px;width:67px">65,634</div>
<div class="cr" style="left:1049px;top:425px;width:67px">61,259</div>
<div class="cr" style="left:1117px;top:425px;width:67px">15,531</div>
<div class="cl" style="left:72px;top:439px;width:59px">Juin</div>
<div class="cr" style="left:132px;top:439px;width:88px">900</div>
<div class="cr" style="left:221px;top:439px;width:88px">30</div>
<div class="cr" style="left:310px;top:439px;width:76px">65</div>
<div class="cr" style="left:387px;top:439px;width:176px">61,78</div>
<div class="cr" style="left:564px;top:439px;width:67px">10,36</div>
<div class="cr" style="left:632px;top:439px;width:67px">136,695069</div>
<div class="cr" style="left:700px;top:439px;width:76px">222,33</div>
<div class="cr" style="left:777px;top:439px;width:67px">3,22</div>
<div class="cr" style="left:845px;top:439px;width:67px">-0,061</div>
<div class="cr" style="left:913px;top:439px;width:67px">-0,061</div>
<div class="cr" style="left:981px;top:439px;width:67px">65,061</div>
<div class="cr" style="left:1049px;top:439px;width:67px">61,720</div>
<div class="cr" style="left:1117px;top:439px;width:67px">10,757</div>
<div class="cl" style="left:72px;top:453px;width:59px">Juillet</div>
<div class="cr" style="left:132px;top:453px;width:88px">961</div>
<div class="cr" style="left:221px;top:453px;width:88px">31</div>
<div class="cr" style="left:310px;top:453px;width:76px">66,4</div>
<div class="cr" style="left:387px;top:453px;width:176px">61,87</div>
<div class="cr" style="left:564px;top:453px;width:67px">20,50</div>
<div class="cr" style="left:632px;top:453px;width:67px">105,918403</div>
<div class="cr" style="left:700px;top:453px;width:76px">219,63</div>
<div class="cr" style="left:777px;top:453px;width:67px">4,53</div>
<div class="cr" style="left:845px;top:453px;width:67px">-0,064</div>
<div class="cr" style="left:913px;top:453px;width:67px">-0,064</div>
<div class="cr" style="left:981px;top:453px;width:67px">66,464</div>
<div class="cr" style="left:1049px;top:453px;width:67px">61,808</div>
<div class="cr" style="left:1117px;top:453px;width:67px">21,086</div>
<div class="cl" style="left:72px;top:467px;width:59px">Août</div>
<div class="cr" style="left:132px;top:467px;width:88px">1024</div>
<div class="cr" style="left:221px;top:467px;width:88px">32</div>
<div class="cr" style="left:310px;top:467px;width:76px">58,9</div>
<div class="cr" style="left:387px;top:467px;width:176px">61,97</div>
<div class="cr" style="left:564px;top:467px;width:67px">9,40</div>
<div class="cr" style="left:632px;top:467px;width:67px">316,543403</div>
<div class="cr" style="left:700px;top:467px;width:76px">216,85</div>
<div class="cr" style="left:777px;top:467px;width:67px">-3,07</div>
<div class="cr" style="left:845px;top:467px;width:67px">-7,750</div>
<div class="cr" style="left:913px;top:467px;width:67px">-7,750</div>
<div class="cr" style="left:981px;top:467px;width:67px">66,650</div>
<div class="cr" style="left:1049px;top:467px;width:67px">54,216</div>
<div class="cr" style="left:1117px;top:467px;width:67px">21,940</div>
<div class="cl" style="left:72px;top:481px;width:59px">Septembre</div>
<div class="cr" style="left:132px;top:481px;width:88px">1089</div>
<div class="cr" style="left:221px;top:481px;width:88px">33</div>
<div class="cr" style="left:310px;top:481px;width:76px">62,8</div>
<div class="cr" style="left:387px;top:481px;width:176px">62,06</div>
<div class="cr" style="left:564px;top:481px;width:67px">0,54</div>
<div class="cr" style="left:632px;top:481px;width:67px">192,978403</div>
<div class="cr" style="left:700px;top:481px;width:76px">214,01</div>
<div class="cr" style="left:777px;top:481px;width:67px">0,74</div>
<div class="cr" style="left:845px;top:481px;width:67px">-1,625</div>
<div class="cr" style="left:913px;top:481px;width:67px">-1,625</div>
<div class="cr" style="left:981px;top:481px;width:67px">64,425</div>
<div class="cr" style="left:1049px;top:481px;width:67px">60,437</div>
<div class="cr" style="left:1117px;top:481px;width:67px">5,583</div>
<div class="cl" style="left:72px;top:495px;width:59px">Octobre</div>
<div class="cr" style="left:132px;top:495px;width:88px">1156</div>
<div class="cr" style="left:221px;top:495px;width:88px">34</div>
<div class="cr" style="left:310px;top:495px;width:76px">68,8</div>
<div class="cr" style="left:387px;top:495px;width:176px">62,16</div>
<div class="cr" style="left:564px;top:495px;width:67px">44,06</div>
<div class="cr" style="left:632px;top:495px;width:67px">62,2784028</div>
<div class="cr" style="left:700px;top:495px;width:76px">211,10</div>
<div class="cr" style="left:777px;top:495px;width:67px">6,64</div>
<div class="cr" style="left:845px;top:495px;width:67px">2,289</div>
<div class="cr" style="left:913px;top:495px;width:67px">2,289</div>
<div class="cr" style="left:981px;top:495px;width:67px">66,511</div>
<div class="cr" style="left:1049px;top:495px;width:67px">64,452</div>
<div class="cr" style="left:1117px;top:495px;width:67px">18,908</div>
<div class="cl" style="left:72px;top:509px;width:59px">Novembre</div>
<div class="cr" style="left:132px;top:509px;width:88px">1225</div>
<div class="cr" style="left:221px;top:509px;width:88px">35</div>
<div class="cr" style="left:310px;top:509px;width:76px">68</div>
<div class="cr" style="left:387px;top:509px;width:176px">62,27</div>
<div class="cr" style="left:564px;top:509px;width:67px">32,89</div>
<div class="cr" style="left:632px;top:509px;width:67px">75,5450694</div>
<div class="cr" style="left:700px;top:509px;width:76px">208,12</div>
<div class="cr" style="left:777px;top:509px;width:67px">5,73</div>
<div class="cr" style="left:845px;top:509px;width:67px">2,441</div>
<div class="cr" style="left:913px;top:509px;width:67px">2,441</div>
<div class="cr" style="left:981px;top:509px;width:67px">65,559</div>
<div class="cr" style="left:1049px;top:509px;width:67px">64,706</div>
<div class="cr" style="left:1117px;top:509px;width:67px">10,849</div>
<div class="cl" style="left:72px;top:523px;width:59px">Décembre</div>
<div class="cr" style="left:132px;top:523px;width:88px">1296</div>
<div class="cr" style="left:221px;top:523px;width:88px">36</div>
<div class="cr" style="left:310px;top:523px;width:76px">72,2</div>
<div class="cr" style="left:387px;top:523px;width:176px">62,37</div>
<div class="cr" style="left:564px;top:523px;width:67px">96,61</div>
<div class="cr" style="left:632px;top:523px;width:67px">20,1750694</div>
<div class="cr" style="left:700px;top:523px;width:76px">205,08</div>
<div class="cr" style="left:777px;top:523px;width:67px">9,83</div>
<div class="cr" style="left:845px;top:523px;width:67px">6,790</div>
<div class="cr" style="left:913px;top:523px;width:67px">6,790</div>
<div class="cr" style="left:981px;top:523px;width:67px">65,410</div>
<div class="cr" style="left:1049px;top:523px;width:67px">69,161</div>
<div class="cr" style="left:1117px;top:523px;width:67px">9,237</div>
<div class="cl" style="left:72px;top:537px;width:59px">Janvier</div>
<div class="cr" style="left:132px;top:537px;width:88px">1369</div>
<div class="cr" style="left:221px;top:537px;width:88px">37</div>
<div class="cr" style="left:310px;top:537px;width:76px">58,8</div>
<div class="cr" style="left:387px;top:537px;width:176px">62,48</div>
<div class="cr" style="left:564px;top:537px;width:67px">13,54</div>
<div class="cr" style="left:632px;top:537px;width:67px">320,111736</div>
<div class="cr" style="left:700px;top:537px;width:76px">201,98</div>
<div class="cr" style="left:777px;top:537px;width:67px">-3,68</div>
<div class="cr" style="left:845px;top:537px;width:67px;color:#9c0006">-6,884</div>
<div class="cr" style="left:913px;top:537px;width:67px">-6,884</div>
<div class="cr" style="left:981px;top:537px;width:67px">65,684</div>
<div class="cr" style="left:1049px;top:537px;width:67px">55,596</div>
<div class="cr" style="left:1117px;top:537px;width:67px">10,264</div>
<div class="cl" style="left:72px;top:551px;width:59px">Février</div>
<div class="cr" style="left:132px;top:551px;width:88px">1444</div>
<div class="cr" style="left:221px;top:551px;width:88px">38</div>
<div class="cr" style="left:310px;top:551px;width:76px">62,1</div>
<div class="cr" style="left:387px;top:551px;width:176px">62,59</div>
<div class="cr" style="left:564px;top:551px;width:67px">0,24</div>
<div class="cr" style="left:632px;top:551px;width:67px">212,916736</div>
<div class="cr" style="left:700px;top:551px;width:76px">198,81</div>
<div class="cr" style="left:777px;top:551px;width:67px">-0,49</div>
<div class="cr" style="left:845px;top:551px;width:67px;color:#9c6500">-4,338</div>
<div class="cr" style="left:913px;top:551px;width:67px">-4,338</div>
<div class="cr" style="left:981px;top:551px;width:67px">66,438</div>
<div class="cr" style="left:1049px;top:551px;width:67px">58,253</div>
<div class="cr" style="left:1117px;top:551px;width:67px">14,799</div>
<div class="cl" style="left:72px;top:565px;width:59px">Mars</div>
<div class="cr" style="left:132px;top:565px;width:88px">1521</div>
<div class="cr" style="left:221px;top:565px;width:88px">39</div>
<div class="cr" style="left:310px;top:565px;width:76px">73,1</div>
<div class="cr" style="left:387px;top:565px;width:176px">62,71</div>
<div class="cr" style="left:564px;top:565px;width:67px">108,03</div>
<div class="cr" style="left:632px;top:565px;width:67px">12,9000694</div>
<div class="cr" style="left:700px;top:565px;width:76px">195,59</div>
<div class="cr" style="left:777px;top:565px;width:67px">10,39</div>
<div class="cr" style="left:845px;top:565px;width:67px;color:#006100">8,170</div>
<div class="cr" style="left:913px;top:565px;width:67px">8,170</div>
<div class="cr" style="left:981px;top:565px;width:67px">64,930</div>
<div class="cr" style="left:1049px;top:565px;width:67px">70,877</div>
<div class="cr" style="left:1117px;top:565px;width:67px">4,943</div>
<div class="cl" style="left:72px;top:579px;width:59px">Avril</div>
<div class="cr" style="left:132px;top:579px;width:88px">1600</div>
<div class="cr" style="left:221px;top:579px;width:88px">40</div>
<div class="cr" style="left:310px;top:579px;width:76px">66,5</div>
<div class="cr" style="left:387px;top:579px;width:176px">62,82</div>
<div class="cr" style="left:564px;top:579px;width:67px">13,51</div>
<div class="cr" style="left:632px;top:579px;width:67px">103,870069</div>
<div class="cr" style="left:700px;top:579px;width:76px">192,31</div>
<div class="cr" style="left:777px;top:579px;width:67px">3,68</div>
<div class="cr" style="left:845px;top:579px;width:67px">1,770</div>
<div class="cr" style="left:913px;top:579px;width:67px">1,770</div>
<div class="cr" style="left:981px;top:579px;width:67px">64,730</div>
<div class="cr" style="left:1049px;top:579px;width:67px">64,594</div>
<div class="cr" style="left:1117px;top:579px;width:67px">3,634</div>
<div class="cl" style="left:72px;top:593px;width:59px">Mai</div>
<div class="cr" style="left:132px;top:593px;width:88px">1681</div>
<div class="cr" style="left:221px;top:593px;width:88px">41</div>
<div class="cr" style="left:310px;top:593px;width:76px">62</div>
<div class="cr" style="left:387px;top:593px;width:176px">62,94</div>
<div class="cr" style="left:564px;top:593px;width:67px">0,89</div>
<div class="cr" style="left:632px;top:593px;width:67px">215,845069</div>
<div class="cr" style="left:700px;top:593px;width:76px">188,98</div>
<div class="cr" style="left:777px;top:593px;width:67px">-0,94</div>
<div class="cr" style="left:845px;top:593px;width:67px">-0,434</div>
<div class="cr" style="left:913px;top:593px;width:67px">-0,434</div>
<div class="cr" style="left:981px;top:593px;width:67px">62,434</div>
<div class="cr" style="left:1049px;top:593px;width:67px">62,511</div>
<div class="cr" style="left:1117px;top:593px;width:67px">0,261</div>
<div class="cl" style="left:72px;top:607px;width:59px">Juin</div>
<div class="cr" style="left:132px;top:607px;width:88px">1764</div>
<div class="cr" style="left:221px;top:607px;width:88px">42</div>
<div class="cr" style="left:310px;top:607px;width:76px">62,2</div>
<div class="cr" style="left:387px;top:607px;width:176px">63,07</div>
<div class="cr" style="left:564px;top:607px;width:67px">0,75</div>
<div class="cr" style="left:632px;top:607px;width:67px">210,008403</div>
<div class="cr" style="left:700px;top:607px;width:76px">185,59</div>
<div class="cr" style="left:777px;top:607px;width:67px">-0,87</div>
<div class="cr" style="left:845px;top:607px;width:67px">-0,061</div>
<div class="cr" style="left:913px;top:607px;width:67px">-0,061</div>
<div class="cr" style="left:981px;top:607px;width:67px">62,261</div>
<div class="cr" style="left:1049px;top:607px;width:67px">63,008</div>
<div class="cr" style="left:1117px;top:607px;width:67px">0,652</div>
<div class="cl" style="left:72px;top:621px;width:59px">Juillet</div>
<div class="cr" style="left:132px;top:621px;width:88px">1849</div>
<div class="cr" style="left:221px;top:621px;width:88px">43</div>
<div class="cr" style="left:310px;top:621px;width:76px">60,4</div>
<div class="cr" style="left:387px;top:621px;width:176px">63,20</div>
<div class="cr" style="left:564px;top:621px;width:67px">7,81</div>
<div class="cr" style="left:632px;top:621px;width:67px">265,418403</div>
<div class="cr" style="left:700px;top:621px;width:76px">182,16</div>
<div class="cr" style="left:777px;top:621px;width:67px">-2,80</div>
<div class="cr" style="left:845px;top:621px;width:67px">-0,064</div>
<div class="cr" style="left:913px;top:621px;width:67px">-0,064</div>
<div class="cr" style="left:981px;top:621px;width:67px">60,464</div>
<div class="cr" style="left:1049px;top:621px;width:67px">63,131</div>
<div class="cr" style="left:1117px;top:621px;width:67px">7,459</div>
<div class="cl" style="left:72px;top:635px;width:59px">Août</div>
<div class="cr" style="left:132px;top:635px;width:88px">1936</div>
<div class="cr" style="left:221px;top:635px;width:88px">44</div>
<div class="cr" style="left:310px;top:635px;width:76px">55,9</div>
<div class="cr" style="left:387px;top:635px;width:176px">63,32</div>
<div class="cr" style="left:564px;top:635px;width:67px">55,13</div>
<div class="cr" style="left:632px;top:635px;width:67px">432,293403</div>
<div class="cr" style="left:700px;top:635px;width:76px">178,68</div>
<div class="cr" style="left:777px;top:635px;width:67px">-7,42</div>
<div class="cr" style="left:845px;top:635px;width:67px">-7,750</div>
<div class="cr" style="left:913px;top:635px;width:67px">-7,750</div>
<div class="cr" style="left:981px;top:635px;width:67px">63,650</div>
<div class="cr" style="left:1049px;top:635px;width:67px">55,575</div>
<div class="cr" style="left:1117px;top:635px;width:67px">0,106</div>
<div class="cl" style="left:72px;top:649px;width:59px">Septembre</div>
<div class="cr" style="left:132px;top:649px;width:88px">2025</div>
<div class="cr" style="left:221px;top:649px;width:88px">45</div>
<div class="cr" style="left:310px;top:649px;width:76px">58,4</div>
<div class="cr" style="left:387px;top:649px;width:176px">63,46</div>
<div class="cr" style="left:564px;top:649px;width:67px">25,58</div>
<div class="cr" style="left:632px;top:649px;width:67px">334,585069</div>
<div class="cr" style="left:700px;top:649px;width:76px">175,15</div>
<div class="cr" style="left:777px;top:649px;width:67px">-5,06</div>
<div class="cr" style="left:845px;top:649px;width:67px">-1,625</div>
<div class="cr" style="left:913px;top:649px;width:67px">-1,625</div>
<div class="cr" style="left:981px;top:649px;width:67px">60,025</div>
<div class="cr" style="left:1049px;top:649px;width:67px">61,832</div>
<div class="cr" style="left:1117px;top:649px;width:67px">11,777</div>
<div class="cl" style="left:72px;top:663px;width:59px">Octobre</div>
<div class="cr" style="left:132px;top:663px;width:88px">2116</div>
<div class="cr" style="left:221px;top:663px;width:88px">46</div>
<div class="cr" style="left:310px;top:663px;width:76px">67,5</div>
<div class="cr" style="left:387px;top:663px;width:176px">63,59</div>
<div class="cr" style="left:564px;top:663px;width:67px">15,27</div>
<div class="cr" style="left:632px;top:663px;width:67px">84,4867361</div>
<div class="cr" style="left:700px;top:663px;width:76px">171,58</div>
<div class="cr" style="left:777px;top:663px;width:67px">3,91</div>
<div class="cr" style="left:845px;top:663px;width:67px">2,289</div>
<div class="cr" style="left:913px;top:663px;width:67px">2,289</div>
<div class="cr" style="left:981px;top:663px;width:67px">65,211</div>
<div class="cr" style="left:1049px;top:663px;width:67px">65,882</div>
<div class="cr" style="left:1117px;top:663px;width:67px">2,618</div>
<div class="cl" style="left:72px;top:677px;width:59px">Novembre</div>
<div class="cr" style="left:132px;top:677px;width:88px">2209</div>
<div class="cr" style="left:221px;top:677px;width:88px">47</div>
<div class="cr" style="left:310px;top:677px;width:76px">66,6</div>
<div class="cr" style="left:387px;top:677px;width:176px">63,73</div>
<div class="cr" style="left:564px;top:677px;width:67px">8,23</div>
<div class="cr" style="left:632px;top:677px;width:67px">101,841736</div>
<div class="cr" style="left:700px;top:677px;width:76px">167,97</div>
<div class="cr" style="left:777px;top:677px;width:67px">2,87</div>
<div class="cr" style="left:845px;top:677px;width:67px">2,441</div>
<div class="cr" style="left:913px;top:677px;width:67px">2,441</div>
<div class="cr" style="left:981px;top:677px;width:67px">64,159</div>
<div class="cr" style="left:1049px;top:677px;width:67px">66,172</div>
<div class="cr" style="left:1117px;top:677px;width:67px">0,183</div>
<div class="cl" style="left:72px;top:691px;width:59px">Décembre</div>
<div class="cr" style="left:132px;top:691px;width:88px">2304</div>
<div class="cr" style="left:221px;top:691px;width:88px">48</div>
<div class="cr" style="left:310px;top:691px;width:76px">68,7</div>
<div class="cr" style="left:387px;top:691px;width:176px">63,87</div>
<div class="cr" style="left:564px;top:691px;width:67px">23,30</div>
<div class="cr" style="left:632px;top:691px;width:67px">63,8667361</div>
<div class="cr" style="left:700px;top:691px;width:76px">164,32</div>
<div class="cr" style="left:777px;top:691px;width:67px">4,83</div>
<div class="cr" style="left:845px;top:691px;width:67px">6,790</div>
<div class="cr" style="left:913px;top:691px;width:67px">6,790</div>
<div class="cr" style="left:981px;top:691px;width:67px">61,910</div>
<div class="cr" style="left:1049px;top:691px;width:67px">70,663</div>
<div class="cr" style="left:1117px;top:691px;width:67px">3,852</div>
<div class="cl" style="left:72px;top:705px;width:59px">Janvier</div>
<div class="cr" style="left:132px;top:705px;width:88px">2401</div>
<div class="cr" style="left:221px;top:705px;width:88px">49</div>
<div class="cr" style="left:310px;top:705px;width:76px">56,2</div>
<div class="cr" style="left:387px;top:705px;width:176px">64,02</div>
<div class="cr" style="left:564px;top:705px;width:67px">61,11</div>
<div class="cr" style="left:632px;top:705px;width:67px">419,908403</div>
<div class="cr" style="left:700px;top:705px;width:76px">160,63</div>
<div class="cr" style="left:777px;top:705px;width:67px">-7,82</div>
<div class="cr" style="left:845px;top:705px;width:67px;color:#9c0006">-6,884</div>
<div class="cr" style="left:913px;top:705px;width:67px">-6,884</div>
<div class="cr" style="left:981px;top:705px;width:67px">63,084</div>
<div class="cr" style="left:1049px;top:705px;width:67px">57,134</div>
<div class="cr" style="left:1117px;top:705px;width:67px">0,872</div>
<div class="cl" style="left:72px;top:719px;width:59px">Février</div>
<div class="cr" style="left:132px;top:719px;width:88px">2500</div>
<div class="cr" style="left:221px;top:719px;width:88px">50</div>
<div class="cr" style="left:310px;top:719px;width:76px">59,3</div>
<div class="cr" style="left:387px;top:719px;width:176px">64,17</div>
<div class="cr" style="left:564px;top:719px;width:67px">23,67</div>
<div class="cr" style="left:632px;top:719px;width:67px">302,470069</div>
<div class="cr" style="left:700px;top:719px;width:76px">156,92</div>
<div class="cr" style="left:777px;top:719px;width:67px">-4,87</div>
<div class="cr" style="left:845px;top:719px;width:67px;color:#9c6500">-4,338</div>
<div class="cr" style="left:913px;top:719px;width:67px">-4,338</div>
<div class="cr" style="left:981px;top:719px;width:67px">63,638</div>
<div class="cr" style="left:1049px;top:719px;width:67px">59,827</div>
<div class="cr" style="left:1117px;top:719px;width:67px">0,277</div>
<div class="cl" style="left:72px;top:733px;width:59px">Mars</div>
<div class="cr" style="left:132px;top:733px;width:88px">2601</div>
<div class="cr" style="left:221px;top:733px;width:88px">51</div>
<div class="cr" style="left:310px;top:733px;width:76px">68,2</div>
<div class="cr" style="left:387px;top:733px;width:176px">64,32</div>
<div class="cr" style="left:564px;top:733px;width:67px">15,09</div>
<div class="cr" style="left:632px;top:733px;width:67px">72,1084028</div>
<div class="cr" style="left:700px;top:733px;width:76px">153,17</div>
<div class="cr" style="left:777px;top:733px;width:67px">3,88</div>
<div class="cr" style="left:845px;top:733px;width:67px;color:#006100">8,170</div>
<div class="cr" style="left:913px;top:733px;width:67px">8,170</div>
<div class="cr" style="left:981px;top:733px;width:67px">60,030</div>
<div class="cr" style="left:1049px;top:733px;width:67px">72,486</div>
<div class="cr" style="left:1117px;top:733px;width:67px">18,369</div>
<div class="cl" style="left:72px;top:747px;width:59px">Avril</div>
<div class="cr" style="left:132px;top:747px;width:88px">2704</div>
<div class="cr" style="left:221px;top:747px;width:88px">52</div>
<div class="cr" style="left:310px;top:747px;width:76px">65,1</div>
<div class="cr" style="left:387px;top:747px;width:176px">64,47</div>
<div class="cr" style="left:564px;top:747px;width:67px">0,40</div>
<div class="cr" style="left:632px;top:747px;width:67px">134,366736</div>
<div class="cr" style="left:700px;top:747px;width:76px">149,39</div>
<div class="cr" style="left:777px;top:747px;width:67px">0,63</div>
<div class="cr" style="left:845px;top:747px;width:67px">1,770</div>
<div class="cr" style="left:913px;top:747px;width:67px">1,770</div>
<div class="cr" style="left:981px;top:747px;width:67px">63,330</div>
<div class="cr" style="left:1049px;top:747px;width:67px">66,239</div>
<div class="cr" style="left:1117px;top:747px;width:67px">1,297</div>
<div class="cy" style="left:23px;top:33px;width:48px;height:167px;line-height:167px">1982</div>
<div class="cy" style="left:23px;top:201px;width:48px;height:167px;line-height:167px">1983</div>
<div class="cy" style="left:23px;top:369px;width:48px;height:167px;line-height:167px">1984</div>
<div class="cy" style="left:23px;top:537px;width:48px;height:167px;line-height:167px">1985</div>
<div class="cy" style="left:23px;top:705px;width:48px;height:167px;line-height:167px">1986</div>
<div class="ab" style="left:0;top:0;width:1659px;height:15px;background:#666"></div>
<div class="ab" style="left:0;top:0;width:23px;height:753px;background:#666"></div>
<div class="ab" style="left:0;top:14px;width:1659px;height:1px;background:#9a9a9a"></div>
<div class="ab" style="left:22px;top:0px;width:1px;height:753px;background:#9a9a9a"></div>
<div class="ch" style="left:23px;width:48px">A</div>
<div class="ab" style="left:71px;top:0;width:1px;height:15px;background:#b4b4b4"></div>
<div class="ch" style="left:72px;width:59px">B</div>
<div class="ab" style="left:131px;top:0;width:1px;height:15px;background:#b4b4b4"></div>
<div class="ch" style="left:132px;width:88px">C</div>
<div class="ab" style="left:220px;top:0;width:1px;height:15px;background:#b4b4b4"></div>
<div class="ch" style="left:221px;width:88px">D</div>
<div class="ab" style="left:309px;top:0;width:1px;height:15px;background:#b4b4b4"></div>
<div class="ch" style="left:310px;width:76px">E</div>
<div class="ab" style="left:386px;top:0;width:1px;height:15px;background:#b4b4b4"></div>
<div class="ch" style="left:387px;width:176px">F</div>
<div class="ab" style="left:563px;top:0;width:1px;height:15px;background:#b4b4b4"></div>
<div class="ch" style="left:564px;width:67px">G</div>
<div class="ab" style="left:631px;top:0;width:1px;height:15px;background:#b4b4b4"></div>
<div class="ch" style="left:632px;width:67px">H</div>
<div class="ab" style="left:699px;top:0;width:1px;height:15px;background:#b4b4b4"></div>
<div class="ch" style="left:700px;width:76px">I</div>
<div class="ab" style="left:776px;top:0;width:1px;height:15px;background:#b4b4b4"></div>
<div class="ch" style="left:777px;width:67px">J</div>
<div class="ab" style="left:844px;top:0;width:1px;height:15px;background:#b4b4b4"></div>
<div class="ch" style="left:845px;width:67px">K</div>
<div class="ab" style="left:912px;top:0;width:1px;height:15px;background:#b4b4b4"></div>
<div class="ch" style="left:913px;width:67px">L</div>
<div class="ab" style="left:980px;top:0;width:1px;height:15px;background:#b4b4b4"></div>
<div class="ch" style="left:981px;width:67px">M</div>
<div class="ab" style="left:1048px;top:0;width:1px;height:15px;background:#b4b4b4"></div>
<div class="ch" style="left:1049px;width:67px">N</div>
<div class="ab" style="left:1116px;top:0;width:1px;height:15px;background:#b4b4b4"></div>
<div class="ch" style="left:1117px;width:67px">O</div>
<div class="ab" style="left:1184px;top:0;width:1px;height:15px;background:#b4b4b4"></div>
<div class="ch" style="left:1185px;width:80px">P</div>
<div class="ab" style="left:1265px;top:0;width:1px;height:15px;background:#b4b4b4"></div>
<div class="ch" style="left:1266px;width:67px">Q</div>
<div class="ab" style="left:1333px;top:0;width:1px;height:15px;background:#b4b4b4"></div>
<div class="ch" style="left:1334px;width:67px">R</div>
<div class="ab" style="left:1401px;top:0;width:1px;height:15px;background:#b4b4b4"></div>
<div class="ch" style="left:1402px;width:67px">S</div>
<div class="ab" style="left:1469px;top:0;width:1px;height:15px;background:#b4b4b4"></div>
<div class="ch" style="left:1470px;width:67px">T</div>
<div class="ab" style="left:1537px;top:0;width:1px;height:15px;background:#b4b4b4"></div>
<div class="ch" style="left:1538px;width:67px">U</div>
<div class="ab" style="left:1605px;top:0;width:1px;height:15px;background:#b4b4b4"></div>
<div class="ch" style="left:1606px;width:67px">V</div>
<div class="rh" style="top:15px;height:17px;line-height:20px">1</div>
<div class="ab" style="left:0;top:32px;width:22px;height:1px;background:#8c8c8c"></div>
<div class="rh" style="top:33px;height:13px;line-height:14px">2</div>
<div class="ab" style="left:0;top:46px;width:22px;height:1px;background:#8c8c8c"></div>
<div class="rh" style="top:47px;height:13px;line-height:14px">3</div>
<div class="ab" style="left:0;top:60px;width:22px;height:1px;background:#8c8c8c"></div>
<div class="rh" style="top:61px;height:13px;line-height:14px">4</div>
<div class="ab" style="left:0;top:74px;width:22px;height:1px;background:#8c8c8c"></div>
<div class="rh" style="top:75px;height:13px;line-height:14px">5</div>
<div class="ab" style="left:0;top:88px;width:22px;height:1px;background:#8c8c8c"></div>
<div class="rh" style="top:89px;height:13px;line-height:14px">6</div>
<div class="ab" style="left:0;top:102px;width:22px;height:1px;background:#8c8c8c"></div>
<div class="rh" style="top:103px;height:13px;line-height:14px">7</div>
<div class="ab" style="left:0;top:116px;width:22px;height:1px;background:#8c8c8c"></div>
<div class="rh" style="top:117px;height:13px;line-height:14px">8</div>
<div class="ab" style="left:0;top:130px;width:22px;height:1px;background:#8c8c8c"></div>
<div class="rh" style="top:131px;height:13px;line-height:14px">9</div>
<div class="ab" style="left:0;top:144px;width:22px;height:1px;background:#8c8c8c"></div>
<div class="rh" style="top:145px;height:13px;line-height:14px">10</div>
<div class="ab" style="left:0;top:158px;width:22px;height:1px;background:#8c8c8c"></div>
<div class="rh" style="top:159px;height:13px;line-height:14px">11</div>
<div class="ab" style="left:0;top:172px;width:22px;height:1px;background:#8c8c8c"></div>
<div class="rh" style="top:173px;height:13px;line-height:14px">12</div>
<div class="ab" style="left:0;top:186px;width:22px;height:1px;background:#8c8c8c"></div>
<div class="rh" style="top:187px;height:13px;line-height:14px">13</div>
<div class="ab" style="left:0;top:200px;width:22px;height:1px;background:#8c8c8c"></div>
<div class="rh" style="top:201px;height:13px;line-height:14px">14</div>
<div class="ab" style="left:0;top:214px;width:22px;height:1px;background:#8c8c8c"></div>
<div class="rh" style="top:215px;height:13px;line-height:14px">15</div>
<div class="ab" style="left:0;top:228px;width:22px;height:1px;background:#8c8c8c"></div>
<div class="rh" style="top:229px;height:13px;line-height:14px">16</div>
<div class="ab" style="left:0;top:242px;width:22px;height:1px;background:#8c8c8c"></div>
<div class="rh" style="top:243px;height:13px;line-height:14px">17</div>
<div class="ab" style="left:0;top:256px;width:22px;height:1px;background:#8c8c8c"></div>
<div class="rh" style="top:257px;height:13px;line-height:14px">18</div>
<div class="ab" style="left:0;top:270px;width:22px;height:1px;background:#8c8c8c"></div>
<div class="rh" style="top:271px;height:13px;line-height:14px">19</div>
<div class="ab" style="left:0;top:284px;width:22px;height:1px;background:#8c8c8c"></div>
<div class="rh" style="top:285px;height:13px;line-height:14px">20</div>
<div class="ab" style="left:0;top:298px;width:22px;height:1px;background:#8c8c8c"></div>
<div class="rh" style="top:299px;height:13px;line-height:14px">21</div>
<div class="ab" style="left:0;top:312px;width:22px;height:1px;background:#8c8c8c"></div>
<div class="rh" style="top:313px;height:13px;line-height:14px">22</div>
<div class="ab" style="left:0;top:326px;width:22px;height:1px;background:#8c8c8c"></div>
<div class="rh" style="top:327px;height:13px;line-height:14px">23</div>
<div class="ab" style="left:0;top:340px;width:22px;height:1px;background:#8c8c8c"></div>
<div class="rh" style="top:341px;height:13px;line-height:14px">24</div>
<div class="ab" style="left:0;top:354px;width:22px;height:1px;background:#8c8c8c"></div>
<div class="rh" style="top:355px;height:13px;line-height:14px">25</div>
<div class="ab" style="left:0;top:368px;width:22px;height:1px;background:#8c8c8c"></div>
<div class="rh" style="top:369px;height:13px;line-height:14px">26</div>
<div class="ab" style="left:0;top:382px;width:22px;height:1px;background:#8c8c8c"></div>
<div class="rh" style="top:383px;height:13px;line-height:14px">27</div>
<div class="ab" style="left:0;top:396px;width:22px;height:1px;background:#8c8c8c"></div>
<div class="rh" style="top:397px;height:13px;line-height:14px">28</div>
<div class="ab" style="left:0;top:410px;width:22px;height:1px;background:#8c8c8c"></div>
<div class="rh" style="top:411px;height:13px;line-height:14px">29</div>
<div class="ab" style="left:0;top:424px;width:22px;height:1px;background:#8c8c8c"></div>
<div class="rh" style="top:425px;height:13px;line-height:14px">30</div>
<div class="ab" style="left:0;top:438px;width:22px;height:1px;background:#8c8c8c"></div>
<div class="rh" style="top:439px;height:13px;line-height:14px">31</div>
<div class="ab" style="left:0;top:452px;width:22px;height:1px;background:#8c8c8c"></div>
<div class="rh" style="top:453px;height:13px;line-height:14px">32</div>
<div class="ab" style="left:0;top:466px;width:22px;height:1px;background:#8c8c8c"></div>
<div class="rh" style="top:467px;height:13px;line-height:14px">33</div>
<div class="ab" style="left:0;top:480px;width:22px;height:1px;background:#8c8c8c"></div>
<div class="rh" style="top:481px;height:13px;line-height:14px">34</div>
<div class="ab" style="left:0;top:494px;width:22px;height:1px;background:#8c8c8c"></div>
<div class="rh" style="top:495px;height:13px;line-height:14px">35</div>
<div class="ab" style="left:0;top:508px;width:22px;height:1px;background:#8c8c8c"></div>
<div class="rh" style="top:509px;height:13px;line-height:14px">36</div>
<div class="ab" style="left:0;top:522px;width:22px;height:1px;background:#8c8c8c"></div>
<div class="rh" style="top:523px;height:13px;line-height:14px">37</div>
<div class="ab" style="left:0;top:536px;width:22px;height:1px;background:#8c8c8c"></div>
<div class="rh" style="top:537px;height:13px;line-height:14px">38</div>
<div class="ab" style="left:0;top:550px;width:22px;height:1px;background:#8c8c8c"></div>
<div class="rh" style="top:551px;height:13px;line-height:14px">39</div>
<div class="ab" style="left:0;top:564px;width:22px;height:1px;background:#8c8c8c"></div>
<div class="rh" style="top:565px;height:13px;line-height:14px">40</div>
<div class="ab" style="left:0;top:578px;width:22px;height:1px;background:#8c8c8c"></div>
<div class="rh" style="top:579px;height:13px;line-height:14px">41</div>
<div class="ab" style="left:0;top:592px;width:22px;height:1px;background:#8c8c8c"></div>
<div class="rh" style="top:593px;height:13px;line-height:14px">42</div>
<div class="ab" style="left:0;top:606px;width:22px;height:1px;background:#8c8c8c"></div>
<div class="rh" style="top:607px;height:13px;line-height:14px">43</div>
<div class="ab" style="left:0;top:620px;width:22px;height:1px;background:#8c8c8c"></div>
<div class="rh" style="top:621px;height:13px;line-height:14px">44</div>
<div class="ab" style="left:0;top:634px;width:22px;height:1px;background:#8c8c8c"></div>
<div class="rh" style="top:635px;height:13px;line-height:14px">45</div>
<div class="ab" style="left:0;top:648px;width:22px;height:1px;background:#8c8c8c"></div>
<div class="rh" style="top:649px;height:13px;line-height:14px">46</div>
<div class="ab" style="left:0;top:662px;width:22px;height:1px;background:#8c8c8c"></div>
<div class="rh" style="top:663px;height:13px;line-height:14px">47</div>
<div class="ab" style="left:0;top:676px;width:22px;height:1px;background:#8c8c8c"></div>
<div class="rh" style="top:677px;height:13px;line-height:14px">48</div>
<div class="ab" style="left:0;top:690px;width:22px;height:1px;background:#8c8c8c"></div>
<div class="rh" style="top:691px;height:13px;line-height:14px">49</div>
<div class="ab" style="left:0;top:704px;width:22px;height:1px;background:#8c8c8c"></div>
<div class="rh" style="top:705px;height:13px;line-height:14px">50</div>
<div class="ab" style="left:0;top:718px;width:22px;height:1px;background:#8c8c8c"></div>
<div class="rh" style="top:719px;height:13px;line-height:14px">51</div>
<div class="ab" style="left:0;top:732px;width:22px;height:1px;background:#8c8c8c"></div>
<div class="rh" style="top:733px;height:13px;line-height:14px">52</div>
<div class="ab" style="left:0;top:746px;width:22px;height:1px;background:#8c8c8c"></div>
<div class="rh" style="top:747px;height:13px;line-height:14px">53</div>
<div class="ab" style="left:0;top:760px;width:22px;height:1px;background:#8c8c8c"></div>
<svg class="ab" style="left:12px;top:4px" width="8" height="8"><path d="M8 0V8H0Z" fill="#c8c8c8"/></svg>
</div>
<svg class="ab" style="left:636px;top:529px" width="626" height="288" viewBox="636 529 626 288" font-family="Liberation Sans, sans-serif">
<rect x="636.5" y="529.5" width="625" height="287" fill="#fff" stroke="#d6d6d6"/>
<path d="M667.5 541.50H1248.4" stroke="#d9d9d9" stroke-width="1"/>
<text x="657.5" y="544.7" font-size="8.600" fill="#595959" text-anchor="end">140</text>
<path d="M667.5 569.50H1248.4" stroke="#d9d9d9" stroke-width="1"/>
<text x="657.5" y="572.7" font-size="8.600" fill="#595959" text-anchor="end">120</text>
<path d="M667.5 597.50H1248.4" stroke="#d9d9d9" stroke-width="1"/>
<text x="657.5" y="600.7" font-size="8.600" fill="#595959" text-anchor="end">100</text>
<path d="M667.5 625.50H1248.4" stroke="#d9d9d9" stroke-width="1"/>
<text x="657.5" y="628.7" font-size="8.600" fill="#595959" text-anchor="end">80</text>
<path d="M667.5 654.50H1248.4" stroke="#d9d9d9" stroke-width="1"/>
<text x="657.5" y="657.7" font-size="8.600" fill="#595959" text-anchor="end">60</text>
<path d="M667.5 682.50H1248.4" stroke="#d9d9d9" stroke-width="1"/>
<text x="657.5" y="685.7" font-size="8.600" fill="#595959" text-anchor="end">40</text>
<path d="M667.5 710.50H1248.4" stroke="#d9d9d9" stroke-width="1"/>
<text x="657.5" y="713.7" font-size="8.600" fill="#595959" text-anchor="end">20</text>
<path d="M667.5 738.50H1248.4" stroke="#d9d9d9" stroke-width="1"/>
<text x="657.5" y="741.7" font-size="8.600" fill="#595959" text-anchor="end">0</text>
<path d="M667.50 738.5V811" stroke="#d9d9d9" stroke-width="1"/>
<path d="M704.50 738.5V811" stroke="#d9d9d9" stroke-width="1"/>
<path d="M740.50 738.5V811" stroke="#d9d9d9" stroke-width="1"/>
<path d="M777.50 738.5V811" stroke="#d9d9d9" stroke-width="1"/>
<path d="M814.50 738.5V811" stroke="#d9d9d9" stroke-width="1"/>
<path d="M844.50 738.5V811" stroke="#d9d9d9" stroke-width="1"/>
<path d="M881.50 738.5V811" stroke="#d9d9d9" stroke-width="1"/>
<path d="M918.50 738.5V811" stroke="#d9d9d9" stroke-width="1"/>
<path d="M954.50 738.5V811" stroke="#d9d9d9" stroke-width="1"/>
<path d="M991.50 738.5V811" stroke="#d9d9d9" stroke-width="1"/>
<path d="M1028.50 738.5V811" stroke="#d9d9d9" stroke-width="1"/>
<path d="M1064.50 738.5V811" stroke="#d9d9d9" stroke-width="1"/>
<path d="M1101.50 738.5V811" stroke="#d9d9d9" stroke-width="1"/>
<path d="M1138.50 738.5V811" stroke="#d9d9d9" stroke-width="1"/>
<path d="M1175.50 738.5V811" stroke="#d9d9d9" stroke-width="1"/>
<path d="M1211.50 738.5V811" stroke="#d9d9d9" stroke-width="1"/>
<path d="M1248.50 738.5V811" stroke="#d9d9d9" stroke-width="1"/>
<text x="685.8" y="808" font-size="8.600" fill="#595959" text-anchor="middle" letter-spacing="0.550">1982</text>
<text x="722.5" y="808" font-size="8.600" fill="#595959" text-anchor="middle" letter-spacing="0.550">1983</text>
<text x="759.2" y="808" font-size="8.600" fill="#595959" text-anchor="middle" letter-spacing="0.550">1984</text>
<text x="795.9" y="808" font-size="8.600" fill="#595959" text-anchor="middle" letter-spacing="0.550">1985</text>
<text x="829.5" y="808" font-size="8.600" fill="#595959" text-anchor="middle" letter-spacing="0.550">1986</text>
<text x="863.2" y="808" font-size="8.600" fill="#595959" text-anchor="middle" letter-spacing="0.550">1987</text>
<text x="899.9" y="808" font-size="8.600" fill="#595959" text-anchor="middle" letter-spacing="0.550">1988</text>
<text x="936.5" y="808" font-size="8.600" fill="#595959" text-anchor="middle" letter-spacing="0.550">1989</text>
<text x="973.2" y="808" font-size="8.600" fill="#595959" text-anchor="middle" letter-spacing="0.550">1990</text>
<text x="1009.9" y="808" font-size="8.600" fill="#595959" text-anchor="middle" letter-spacing="0.550">1991</text>
<text x="1046.6" y="808" font-size="8.600" fill="#595959" text-anchor="middle" letter-spacing="0.550">1992</text>
<text x="1083.3" y="808" font-size="8.600" fill="#595959" text-anchor="middle" letter-spacing="0.550">1993</text>
<text x="1120.0" y="808" font-size="8.600" fill="#595959" text-anchor="middle" letter-spacing="0.550">1994</text>
<text x="1156.7" y="808" font-size="8.600" fill="#595959" text-anchor="middle" letter-spacing="0.550">1995</text>
<text x="1193.4" y="808" font-size="8.600" fill="#595959" text-anchor="middle" letter-spacing="0.550">1996</text>
<text x="1230.1" y="808" font-size="8.600" fill="#595959" text-anchor="middle" letter-spacing="0.550">1997</text>
<text transform="translate(672.6 744.300) rotate(-90)" font-size="9.300" fill="#595959" text-anchor="end" letter-spacing="0.100">Janvier</text>
<text transform="translate(687.9 744.300) rotate(-90)" font-size="9.300" fill="#595959" text-anchor="end" letter-spacing="0.100">Juin</text>
<text transform="translate(703.2 744.300) rotate(-90)" font-size="9.300" fill="#595959" text-anchor="end" letter-spacing="0.100">Novembre</text>
<text transform="translate(718.5 744.300) rotate(-90)" font-size="9.300" fill="#595959" text-anchor="end" letter-spacing="0.100">Avril</text>
<text transform="translate(733.8 744.300) rotate(-90)" font-size="9.300" fill="#595959" text-anchor="end" letter-spacing="0.100">Septembre</text>
<text transform="translate(749.1 744.300) rotate(-90)" font-size="9.300" fill="#595959" text-anchor="end" letter-spacing="0.100">Février</text>
<text transform="translate(764.3 744.300) rotate(-90)" font-size="9.300" fill="#595959" text-anchor="end" letter-spacing="0.100">Juillet</text>
<text transform="translate(779.6 744.300) rotate(-90)" font-size="9.300" fill="#595959" text-anchor="end" letter-spacing="0.100">Décembre</text>
<text transform="translate(794.9 744.300) rotate(-90)" font-size="9.300" fill="#595959" text-anchor="end" letter-spacing="0.100">Mai</text>
<text transform="translate(810.2 744.300) rotate(-90)" font-size="9.300" fill="#595959" text-anchor="end" letter-spacing="0.100">Octobre</text>
<text transform="translate(825.5 744.300) rotate(-90)" font-size="9.300" fill="#595959" text-anchor="end" letter-spacing="0.100">Mai</text>
<text transform="translate(840.8 744.300) rotate(-90)" font-size="9.300" fill="#595959" text-anchor="end" letter-spacing="0.100">Octobre</text>
<text transform="translate(856.1 744.300) rotate(-90)" font-size="9.300" fill="#595959" text-anchor="end" letter-spacing="0.100">Mars</text>
<text transform="translate(871.4 744.300) rotate(-90)" font-size="9.300" fill="#595959" text-anchor="end" letter-spacing="0.100">Août</text>
<text transform="translate(886.6 744.300) rotate(-90)" font-size="9.300" fill="#595959" text-anchor="end" letter-spacing="0.100">Janvier</text>
<text transform="translate(901.9 744.300) rotate(-90)" font-size="9.300" fill="#595959" text-anchor="end" letter-spacing="0.100">Juin</text>
<text transform="translate(917.2 744.300) rotate(-90)" font-size="9.300" fill="#595959" text-anchor="end" letter-spacing="0.100">Novembre</text>
<text transform="translate(932.5 744.300) rotate(-90)" font-size="9.300" fill="#595959" text-anchor="end" letter-spacing="0.100">Avril</text>
<text transform="translate(947.8 744.300) rotate(-90)" font-size="9.300" fill="#595959" text-anchor="end" letter-spacing="0.100">Septembre</text>
<text transform="translate(963.1 744.300) rotate(-90)" font-size="9.300" fill="#595959" text-anchor="end" letter-spacing="0.100">Février</text>
<text transform="translate(978.4 744.300) rotate(-90)" font-size="9.300" fill="#595959" text-anchor="end" letter-spacing="0.100">Juillet</text>
<text transform="translate(993.7 744.300) rotate(-90)" font-size="9.300" fill="#595959" text-anchor="end" letter-spacing="0.100">Décembre</text>
<text transform="translate(1008.9 744.300) rotate(-90)" font-size="9.300" fill="#595959" text-anchor="end" letter-spacing="0.100">Mai</text>
<text transform="translate(1024.2 744.300) rotate(-90)" font-size="9.300" fill="#595959" text-anchor="end" letter-spacing="0.100">Octobre</text>
<text transform="translate(1039.5 744.300) rotate(-90)" font-size="9.300" fill="#595959" text-anchor="end" letter-spacing="0.100">Mars</text>
<text transform="translate(1054.8 744.300) rotate(-90)" font-size="9.300" fill="#595959" text-anchor="end" letter-spacing="0.100">Août</text>
<text transform="translate(1070.1 744.300) rotate(-90)" font-size="9.300" fill="#595959" text-anchor="end" letter-spacing="0.100">Janvier</text>
<text transform="translate(1085.4 744.300) rotate(-90)" font-size="9.300" fill="#595959" text-anchor="end" letter-spacing="0.100">Juin</text>
<text transform="translate(1100.7 744.300) rotate(-90)" font-size="9.300" fill="#595959" text-anchor="end" letter-spacing="0.100">Novembre</text>
<text transform="translate(1115.9 744.300) rotate(-90)" font-size="9.300" fill="#595959" text-anchor="end" letter-spacing="0.100">Avril</text>
<text transform="translate(1131.2 744.300) rotate(-90)" font-size="9.300" fill="#595959" text-anchor="end" letter-spacing="0.100">Septembre</text>
<text transform="translate(1146.5 744.300) rotate(-90)" font-size="9.300" fill="#595959" text-anchor="end" letter-spacing="0.100">Février</text>
<text transform="translate(1161.8 744.300) rotate(-90)" font-size="9.300" fill="#595959" text-anchor="end" letter-spacing="0.100">Juillet</text>
<text transform="translate(1177.1 744.300) rotate(-90)" font-size="9.300" fill="#595959" text-anchor="end" letter-spacing="0.100">Décembre</text>
<text transform="translate(1192.4 744.300) rotate(-90)" font-size="9.300" fill="#595959" text-anchor="end" letter-spacing="0.100">Mai</text>
<text transform="translate(1207.7 744.300) rotate(-90)" font-size="9.300" fill="#595959" text-anchor="end" letter-spacing="0.100">Octobre</text>
<text transform="translate(1223.0 744.300) rotate(-90)" font-size="9.300" fill="#595959" text-anchor="end" letter-spacing="0.100">Mars</text>
<text transform="translate(1238.2 744.300) rotate(-90)" font-size="9.300" fill="#595959" text-anchor="end" letter-spacing="0.100">Août</text>
<polyline points="669.0,665.6 672.1,661.1 675.1,649.0 678.2,656.3 681.3,655.1 684.3,658.2 687.4,661.8 690.4,669.8 693.5,664.1 696.5,656.2 699.6,658.3 702.7,644.4 705.7,663.1 708.8,662.1 711.8,645.6 714.9,652.9 717.9,651.0 721.0,652.2 724.1,657.4 727.1,664.3 730.2,658.6 733.2,648.9 736.3,650.4 739.3,638.5 742.4,657.9 745.5,655.2 748.5,646.2 751.6,651.3 754.6,646.8 757.7,647.0 760.7,645.1 763.8,655.6 766.9,650.1 769.9,641.7 773.0,642.8 776.0,636.9 779.1,655.8 782.2,651.1 785.2,635.6 788.3,644.9 791.3,651.3 794.4,651.0 797.4,653.5 800.5,659.8 803.6,656.3 806.6,643.5 809.7,644.8 812.7,641.8 815.8,642.5 818.8,646.9 821.9,647.6 825.0,650.4 828.0,649.3 831.1,658.6 834.1,650.4 837.2,641.4 840.2,643.5 843.3,634.7 846.4,656.9 849.4,650.7 852.5,636.3 855.5,640.7 858.6,640.7 861.6,646.9 864.7,640.4 867.8,650.7 870.8,643.8 873.9,631.8 876.9,631.8 880.0,631.8 883.0,644.9 886.1,637.3 889.2,631.8 892.2,632.8 895.3,635.9 898.3,633.9 901.4,638.0 904.4,646.9 907.5,638.0 910.6,629.7 913.6,638.0 916.7,630.4 919.7,643.8 922.8,645.2 925.8,621.0 928.9,628.7 932.0,637.9 935.0,633.7 938.1,641.8 941.1,647.0 944.2,640.4 947.2,629.2 950.3,624.9 953.4,618.9 956.4,636.2 959.5,635.1 962.5,615.8 965.6,627.8 968.7,633.0 971.7,629.9 974.8,634.1 977.8,641.8 980.9,631.6 983.9,622.8 987.0,623.8 990.1,621.0 993.1,645.6 996.2,645.6 999.2,620.7 1002.3,627.8 1005.3,631.6 1008.4,635.1 1011.5,629.9 1014.5,642.1 1017.6,630.6 1020.6,623.8 1023.7,627.1 1026.7,623.1 1029.8,643.2 1032.9,632.3 1035.9,617.3 1039.0,625.2 1042.0,627.5 1045.1,628.9 1048.1,617.1 1051.2,636.1 1054.3,626.8 1057.3,617.5 1060.4,621.0 1063.4,612.4 1066.5,633.5 1069.5,625.9 1072.6,598.9 1075.7,611.7 1078.7,612.1 1081.8,613.8 1084.8,609.2 1087.9,621.4 1090.9,610.3 1094.0,649.6 1097.1,613.5 1100.1,593.1 1103.2,621.4 1106.2,617.1 1109.3,589.2 1112.3,602.9 1115.4,605.0 1118.5,599.2 1121.5,598.5 1124.6,616.4 1127.6,593.6 1130.7,585.3 1133.7,588.9 1136.8,575.3 1139.9,606.4 1142.9,603.1 1146.0,576.0 1149.0,591.7 1152.1,601.0 1155.2,594.3 1158.2,592.2 1161.3,605.2 1164.3,595.3 1167.4,586.0 1170.4,593.8 1173.5,598.9 1176.6,608.2 1179.6,604.3 1182.7,580.9 1185.7,593.1 1188.8,605.2 1191.8,590.3 1194.9,588.8 1198.0,603.1 1201.0,590.3 1204.1,585.5 1207.1,580.9 1210.2,582.0" fill="none" stroke="#4f81bd" stroke-width="2.600" stroke-linejoin="round" stroke-linecap="round"/>
<polyline points="1204.1,586.4 1207.1,586.4 1210.2,585.3 1213.2,595.0 1216.3,591.0 1219.4,570.9 1222.4,579.2 1225.5,582.4 1228.5,580.6 1231.6,580.6 1234.6,591.0 1237.7,580.6 1240.8,574.1 1243.8,572.7 1246.9,566.7" fill="none" stroke="#c0504d" stroke-width="2.600" stroke-linejoin="round" stroke-linecap="round"/>
</svg>
<div class="ab" style="left:1659px;top:207px;width:21px;height:753px;background:#666"></div>
<div class="ab" style="left:1662px;top:210px;width:15px;height:750px;background:#585858"></div>
<div class="ab" style="left:1662px;top:210px;width:13px;height:12px;background:#8c8c8c;border:1px solid #4a4a4a"></div>
<svg class="ab" style="left:1665px;top:213px" width="9" height="6"><path d="M0.500 5.500H8.500L4.500 1Z" fill="#333"/></svg>
<div class="ab" style="left:1662px;top:223px;width:13px;height:193px;background:#999;border:1px solid #4a4a4a"></div>
<div class="ab" style="left:1662px;top:947px;width:13px;height:12px;background:#8c8c8c;border:1px solid #4a4a4a"></div>
<svg class="ab" style="left:1665px;top:951px" width="9" height="6"><path d="M0.500 0.500H8.500L4.500 5Z" fill="#333"/></svg>
<div class="ab" style="left:0;top:960px;width:1680px;height:29px;background:#666"></div>
<div class="ab" style="left:0;top:987px;width:1680px;height:2px;background:linear-gradient(#5a5a5a,#4a4a4a)"></div>
<svg class="ab" style="left:27px;top:969px" width="6" height="9"><path d="M5.500 0.500V8.500L1 4.500Z" fill="#8e8e8e"/></svg>
<svg class="ab" style="left:55px;top:969px" width="6" height="9"><path d="M0.500 0.500V8.500L5 4.500Z" fill="#8e8e8e"/></svg>
<div class="ab" style="left:100px;top:965px;width:1px;height:19px;background:#a8a8a8"></div>
<div class="ab" style="left:103px;top:963px;width:39px;height:22px;background:#fff"></div>
<span class="tx" style="left:112.0px;top:964.5px;height:18px;line-height:18px;font-size:13.5px;color:#222;letter-spacing:-0.260px;">tp1</span>
<div class="ab" style="left:144px;top:965px;width:1px;height:19px;background:#a8a8a8"></div>
<span class="tx" style="left:156.0px;top:964.5px;height:18px;line-height:18px;font-size:13.5px;color:#e6e6e6;letter-spacing:0.073px;">tp2</span>
<div class="ab" style="left:188px;top:960px;width:113px;height:24px;background:#fff"></div>
<div class="ab" style="left:188px;top:984px;width:113px;height:2px;background:#217346"></div>
<span class="tx" style="left:200.5px;top:964.5px;height:18px;line-height:18px;font-size:13.5px;color:#1e7145;letter-spacing:-0.557px;font-weight:bold;">tp2_previsions</span>
<span class="tx" style="left:313.0px;top:964.5px;height:18px;line-height:18px;font-size:13.5px;color:#e6e6e6;letter-spacing:-0.424px;">tp2_alpha</span>
<div class="ab" style="left:382px;top:964px;width:1px;height:19px;background:#a8a8a8"></div>
<svg class="ab" style="left:414px;top:965px" width="19" height="19" viewBox="0 0 19 19"><circle cx="9.700" cy="9.300" r="7.800" fill="none" stroke="#f0f0f0" stroke-width="1.500"/><path d="M9.700 5.300V13.300M5.700 9.300H13.700" stroke="#f0f0f0" stroke-width="1.700"/></svg>
<div class="ab" style="left:658px;top:970px;width:2px;height:2px;background:#e0e0e0"></div>
<div class="ab" style="left:658px;top:974px;width:2px;height:2px;background:#e0e0e0"></div>
<div class="ab" style="left:658px;top:978px;width:2px;height:2px;background:#e0e0e0"></div>
<div class="ab" style="left:675px;top:967px;width:984px;height:15px;background:#555"></div>
<div class="ab" style="left:675px;top:967px;width:13px;height:13px;background:#8c8c8c;border:1px solid #4a4a4a"></div>
<svg class="ab" style="left:679px;top:970px" width="6" height="9"><path d="M5.500 0.500V8.500L1 4.500Z" fill="#333"/></svg>
<div class="ab" style="left:690px;top:967px;width:907px;height:13px;background:#999;border:1px solid #4a4a4a;border-left:none"></div>
<div class="ab" style="left:1645px;top:967px;width:13px;height:13px;background:#8c8c8c;border:1px solid #4a4a4a"></div>
<svg class="ab" style="left:1650px;top:970px" width="6" height="9"><path d="M0.500 0.500V8.500L5 4.500Z" fill="#333"/></svg>
<div class="ab" style="left:0;top:989px;width:1680px;height:19px;background:#c1bdba"></div>
<span class="tx" style="left:7.5px;top:991.5px;height:16px;line-height:16px;font-size:12px;color:#333;letter-spacing:-0.704px;">Prêt</span>
<svg class="ab" style="left:45px;top:991px" width="19" height="16" viewBox="45 991 19 16"><rect x="47.500" y="994.500" width="13" height="10" fill="none" stroke="#222" stroke-width="1.100"/><path d="M47 992.800H61" stroke="#222" stroke-width="1"/><path d="M49.500 997.500H53M49.500 1000H52.500M49.500 1002.500H52" stroke="#222" stroke-width="1"/><circle cx="56.800" cy="1000.800" r="3.500" fill="#c1bdba" stroke="#222" stroke-width="1.100"/><circle cx="56.800" cy="1000.800" r="1.600" fill="#222"/></svg>
<svg class="ab" style="left:77px;top:990px" width="19" height="18" viewBox="77 990 19 18"><circle cx="85" cy="994.300" r="1.800" fill="none" stroke="#222" stroke-width="1.100"/><path d="M79.800 996.800C82 997.800 83.500 998 85 998C86.500 998 88 997.800 90.200 996.800M83.300 998V1001.500L81.300 1005.800M86.700 998V1000.500" fill="none" stroke="#222" stroke-width="1.300" stroke-linecap="round"/><path d="M87 1000.500L92.200 1005.800M92.200 1000.500L87 1005.800" stroke="#222" stroke-width="1.200"/></svg>
<span class="tx" style="left:97.5px;top:991.5px;height:16px;line-height:16px;font-size:12px;color:#333;letter-spacing:-0.269px;">Accessibilité : consultez nos recommandations</span>
<div class="ab" style="left:1383px;top:989px;width:40px;height:19px;background:#a9a6a3"></div>
<svg class="ab" style="left:1395px;top:992px" width="15" height="14" viewBox="0 0 15 14"><rect x="1" y="1" width="12.500" height="12" fill="none" stroke="#222" stroke-width="1.100"/><path d="M5.200 1V13M9.400 1V13M1 5V5H13.500M1 9H13.500" stroke="#222" stroke-width="1.100"/></svg>
<svg class="ab" style="left:1435px;top:992px" width="16" height="14" viewBox="0 0 16 14"><rect x="1" y="1" width="13.500" height="12" fill="none" stroke="#222" stroke-width="1.300"/><rect x="4.500" y="3.500" width="6.500" height="7" fill="none" stroke="#222" stroke-width="1"/><path d="M6 6H9.500M6 8.200H9.500" stroke="#222" stroke-width="1"/></svg>
<svg class="ab" style="left:1475px;top:992px" width="16" height="14" viewBox="0 0 16 14"><rect x="1" y="1" width="13.500" height="12" fill="none" stroke="#222" stroke-width="1.300"/><path d="M5.500 1V7.500M9.500 1V7.500M1 7.500H9.500" fill="none" stroke="#222" stroke-width="1.300"/></svg>
<div class="ab" style="left:1509px;top:998px;width:8px;height:1px;background:#222"></div>
<div class="ab" style="left:1522px;top:998px;width:100px;height:1px;background:#333"></div>
<div class="ab" style="left:1572px;top:995px;width:1px;height:7px;background:#333"></div>
<div class="ab" style="left:1562px;top:993px;width:5px;height:12px;background:#777"></div>
<div class="ab" style="left:1627px;top:998px;width:9px;height:1px;background:#222"></div><div class="ab" style="left:1631px;top:994px;width:1px;height:9px;background:#222"></div>
<span class="tx" style="left:1648.0px;top:991.5px;height:16px;line-height:16px;font-size:12px;color:#333;letter-spacing:-0.840px;">85 %</span>
</body></html>
